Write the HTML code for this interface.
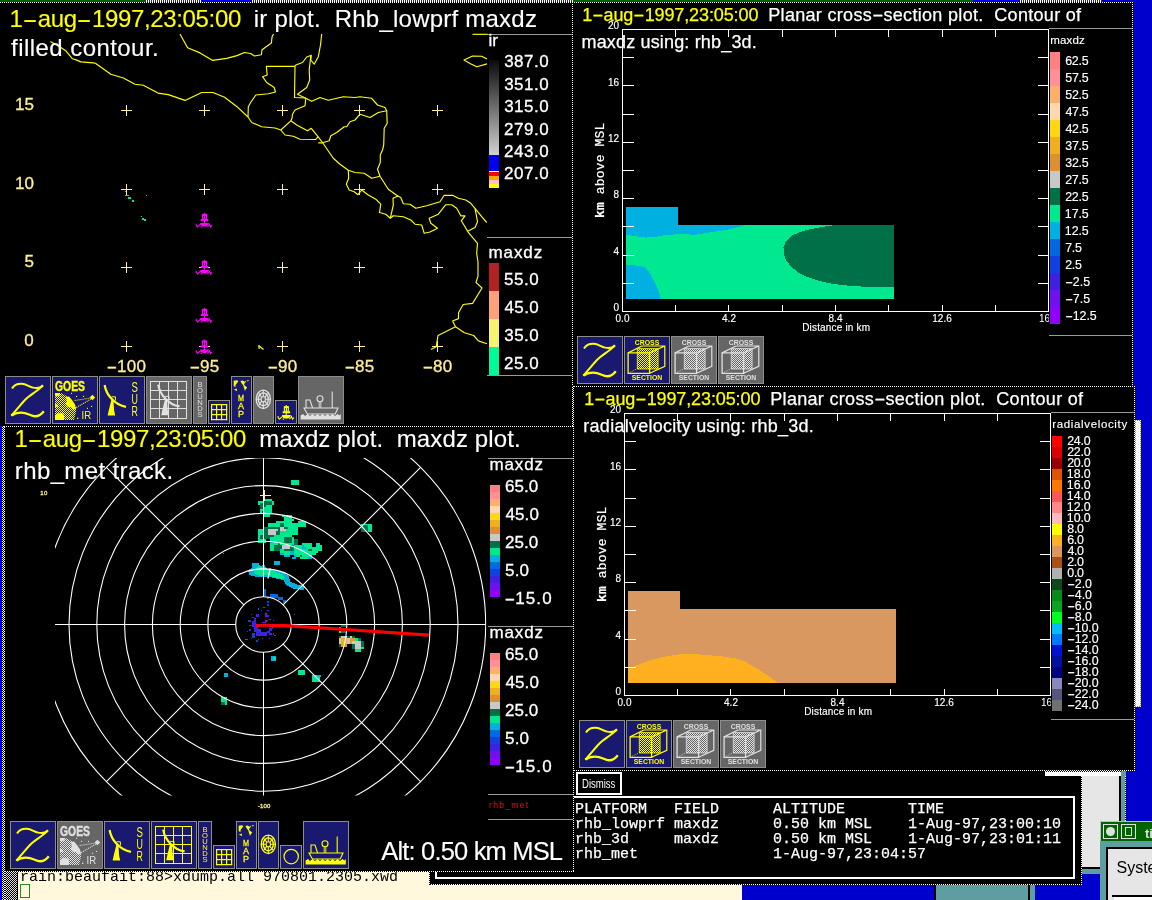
<!DOCTYPE html><html><head><meta charset="utf-8"><title>zebra display</title><style>
html,body{margin:0;padding:0;background:#000;overflow:hidden;}
#r{will-change:transform;position:relative;width:1152px;height:900px;overflow:hidden;background:#000;font-family:"Liberation Sans",sans-serif;}
.b{position:absolute;}
.t{position:absolute;white-space:pre;line-height:1;}
.hd{background-image:repeating-linear-gradient(90deg,#fff 0 1px,#000 1px 2px);}
.vd{background-image:repeating-linear-gradient(180deg,#fff 0 1px,#000 1px 2px);}
svg{position:absolute;overflow:hidden;}
.hy{display:inline-block;letter-spacing:0;}
.k{-webkit-text-stroke:0.25px currentColor;}
.k24{-webkit-text-stroke:0.12px currentColor;}
.k18{-webkit-text-stroke:0.25px currentColor;}
.k11{-webkit-text-stroke:0.15px currentColor;}
.k17{-webkit-text-stroke:0.3px currentColor;}
</style></head><body><div id="r">
<div class="b" style="left:1133px;top:0px;width:19px;height:387px;background:#0000cd;"></div>
<div class="b" style="left:1135px;top:386px;width:17px;height:436px;background:#0000cd;"></div>
<div class="b" style="left:1126px;top:771px;width:26px;height:52px;background:#0000cd;"></div>
<div class="b" style="left:0px;top:0px;width:1152px;height:2px;background:#9a9a9a;background-image:repeating-linear-gradient(90deg,#fff 0 1px,#333 1px 2px);"></div>
<div class="b" style="left:0px;top:0px;width:145px;height:2px;background:#006400;"></div>
<div class="b" style="left:201px;top:0px;width:51px;height:2px;background:#0000ee;"></div>
<div class="b" style="left:573px;top:0px;width:400px;height:2px;background:#006400;"></div>
<div class="b" style="left:973px;top:0px;width:47px;height:2px;background:#0000ee;"></div>
<div class="b" style="left:1102px;top:0px;width:50px;height:2px;background:#0000cd;"></div>
<div class="b" style="left:5px;top:871px;width:737px;height:29px;background:#fff8dc;"></div>
<div class="b" style="left:5px;top:871px;width:12px;height:29px;background:#888;background-image:repeating-conic-gradient(#000 0 25%,#ddd 0 50%);background-size:2px 2px;"></div>
<div class="b" style="left:17px;top:871px;width:1px;height:29px;background:#000;"></div>
<span class="t term" style="left:20.00px;top:869.50px;font-size:15px;color:#000;font-family:'Liberation Mono',monospace;">rain:beaufait:88&gt;xdump.all 970801.2305.xwd</span>
<div class="b" style="left:20px;top:884px;width:10px;height:14px;background:#fff8dc;box-sizing:border-box;border:1px solid #228b22;"></div>
<div class="b" style="left:742px;top:885px;width:192px;height:15px;background:#0000cd;"></div>
<div class="b" style="left:934px;top:885px;width:2px;height:15px;background:#000;"></div>
<div class="b" style="left:936px;top:885px;width:92px;height:15px;background:#5f9ea0;"></div>
<div class="b" style="left:1028px;top:885px;width:2px;height:15px;background:#000;"></div>
<div class="b" style="left:1030px;top:885px;width:5px;height:15px;background:#5f9ea0;"></div>
<div class="b" style="left:1035px;top:874px;width:66px;height:26px;background:#0000cd;"></div>
<div class="b" style="left:0px;top:426px;width:2px;height:474px;background:#0000ee;"></div>
<div class="b" style="left:2px;top:426px;width:3px;height:474px;background:#999;background-image:repeating-conic-gradient(#fff 0 25%,#000 0 50%);background-size:2px 2px;"></div>
<div class="b" style="left:429px;top:771px;width:653px;height:114px;background:#000;"></div>
<div class="b hd" style="left:429px;top:884px;width:653px;height:1px;background-position:0px 0"></div>
<div class="b vd" style="left:429px;top:871px;width:1px;height:14px;background-position:0 0px"></div>
<div class="b vd" style="left:1081px;top:776px;width:1px;height:109px;background-position:0 0px"></div>
<div class="b" style="left:1045px;top:771px;width:77px;height:5px;background:#fff;background-image:repeating-linear-gradient(90deg,#fff 0 1px,#000 1px 2px);background-size:2px 1px;background-repeat:repeat-x;"></div>
<div class="b" style="left:1082px;top:776px;width:37px;height:92px;background:#e6e6e6;"></div>
<div class="b" style="left:1119px;top:776px;width:2px;height:46px;background:#000;"></div>
<div class="b" style="left:1121px;top:771px;width:5px;height:51px;background:#5f9ea0;"></div>
<div class="b vd" style="left:1125px;top:776px;width:1px;height:46px;background-position:0 0px"></div>
<div class="b" style="left:1082px;top:867px;width:19px;height:2px;background:#000;"></div>
<div class="b" style="left:1082px;top:869px;width:19px;height:5px;background:#5f9ea0;"></div>
<div class="b" style="left:435px;top:796px;width:640px;height:83px;background:transparent;box-sizing:border-box;border:2px solid #fff;"></div>
<div class="b" style="left:576px;top:772px;width:46px;height:23px;background:#000;box-sizing:border-box;border:2px solid #fff;"></div>
<span class="t" style="left:581.70px;top:778.34px;font-size:12px;color:#fff;transform-origin:0 0;transform:scaleX(0.795);">Dismiss</span>
<span class="t k" style="left:575.00px;top:801.90px;font-size:15px;color:#fff;font-family:'Liberation Mono',monospace;">PLATFORM   FIELD      ALTITUDE       TIME</span>
<span class="t k" style="left:575.00px;top:816.80px;font-size:15px;color:#fff;font-family:'Liberation Mono',monospace;">rhb_lowprf maxdz      0.50 km MSL    1-Aug-97,23:00:10</span>
<span class="t k" style="left:575.00px;top:831.70px;font-size:15px;color:#fff;font-family:'Liberation Mono',monospace;">rhb_3d     maxdz      0.50 km MSL    1-Aug-97,23:01:11</span>
<span class="t k" style="left:575.00px;top:846.60px;font-size:15px;color:#fff;font-family:'Liberation Mono',monospace;">rhb_met               1-Aug-97,23:04:57</span>
<div class="b" style="left:1100px;top:821px;width:52px;height:79px;background:#5f9ea0;"></div>
<div class="b" style="left:1100px;top:821px;width:52px;height:20px;background:#006400;box-sizing:border-box;border-top:1px solid #b0c4c4;border-left:1px solid #b0c4c4;"></div>
<div class="b" style="left:1103px;top:824px;width:15px;height:15px;background:#006400;box-sizing:border-box;border:1px solid #e0e0e0;"></div>
<div class="b" style="left:1106px;top:827px;width:9px;height:9px;background:#e0e0e0;border-radius:50%;"></div>
<div class="b" style="left:1121px;top:824px;width:15px;height:15px;background:#006400;box-sizing:border-box;border:1px solid #e0e0e0;"></div>
<div class="b" style="left:1125px;top:827px;width:7px;height:9px;background:#006400;box-sizing:border-box;border:1px solid #e0e0e0;"></div>
<span class="t" style="left:1145.00px;top:826.50px;font-size:13px;color:#e0e0e0;font-weight:bold;">ti</span>
<div class="b" style="left:1106px;top:847px;width:46px;height:53px;background:#000;"></div>
<div class="b" style="left:1108px;top:849px;width:44px;height:51px;background:#e6e6e6;"></div>
<span class="t" style="left:1116.50px;top:859.96px;font-size:16px;color:#000;">Syste</span>
<div class="b" style="left:1112px;top:895px;width:40px;height:2px;background:#000;"></div>
<div class="b" style="left:1114px;top:897px;width:38px;height:3px;background:#fff;"></div>
<div class="b" style="left:0px;top:3px;width:573px;height:423px;background:#000;"></div>
<div class="b" style="left:5px;top:427px;width:569px;height:444px;background:#000;"></div>
<div class="b" style="left:574px;top:3px;width:559px;height:383px;background:#000;"></div>
<div class="b" style="left:575px;top:387px;width:560px;height:384px;background:#000;"></div>
<div class="b" style="left:487px;top:34px;width:85px;height:1px;background:#9a9a9a;"></div>
<div class="b" style="left:487px;top:237px;width:85px;height:1px;background:#9a9a9a;"></div>
<div class="b" style="left:487px;top:375px;width:85px;height:1px;background:#9a9a9a;"></div>
<svg style="left:0;top:3px" width="573" height="423" viewBox="0 3 573 423" shape-rendering="crispEdges"><defs><pattern id="sty" width="2" height="2" patternUnits="userSpaceOnUse"><rect width="1" height="1" fill="#ffff00"/><rect x="1" y="1" width="1" height="1" fill="#ffff00"/></pattern><pattern id="stw" width="2" height="2" patternUnits="userSpaceOnUse"><rect width="1" height="1" fill="#e0e0e0"/><rect x="1" y="1" width="1" height="1" fill="#e0e0e0"/></pattern></defs><defs><linearGradient id="irg" x1="0" y1="0" x2="0" y2="1"><stop offset="0" stop-color="#0a0a0a"/><stop offset="1" stop-color="#d2d2d2"/></linearGradient></defs><rect x="489" y="60" width="10" height="95" fill="url(#irg)"/><rect x="489" y="155" width="10" height="16" fill="#0000ee"/><rect x="489" y="171" width="10" height="1" fill="#ffffff"/><rect x="489" y="172" width="10" height="4" fill="#ff0000"/><rect x="489" y="176" width="10" height="4" fill="#ffa500"/><rect x="489" y="180" width="10" height="4" fill="#ffc0cb"/><rect x="489" y="184" width="10" height="4" fill="#ffff00"/><rect x="489" y="263" width="10" height="28" fill="#b22222"/><rect x="489" y="291" width="10" height="28" fill="#ffa07a"/><rect x="489" y="319" width="10" height="28" fill="#f8f272"/><rect x="489" y="347" width="10" height="28" fill="#00fa9a"/><path d="M121.0 110.5 H132.0 M126.5 105.0 V116.0" stroke="#ffee94" stroke-width="1" fill="none"/><path d="M121.0 189.5 H132.0 M126.5 184.0 V195.0" stroke="#ffee94" stroke-width="1" fill="none"/><path d="M121.0 267.5 H132.0 M126.5 262.0 V273.0" stroke="#ffee94" stroke-width="1" fill="none"/><path d="M121.0 346.5 H132.0 M126.5 341.0 V352.0" stroke="#ffee94" stroke-width="1" fill="none"/><path d="M199.0 110.5 H210.0 M204.5 105.0 V116.0" stroke="#ffee94" stroke-width="1" fill="none"/><path d="M199.0 189.5 H210.0 M204.5 184.0 V195.0" stroke="#ffee94" stroke-width="1" fill="none"/><path d="M199.0 267.5 H210.0 M204.5 262.0 V273.0" stroke="#ffee94" stroke-width="1" fill="none"/><path d="M199.0 346.5 H210.0 M204.5 341.0 V352.0" stroke="#ffee94" stroke-width="1" fill="none"/><path d="M277.0 110.5 H288.0 M282.5 105.0 V116.0" stroke="#ffee94" stroke-width="1" fill="none"/><path d="M277.0 189.5 H288.0 M282.5 184.0 V195.0" stroke="#ffee94" stroke-width="1" fill="none"/><path d="M277.0 267.5 H288.0 M282.5 262.0 V273.0" stroke="#ffee94" stroke-width="1" fill="none"/><path d="M277.0 346.5 H288.0 M282.5 341.0 V352.0" stroke="#ffee94" stroke-width="1" fill="none"/><path d="M354.0 110.5 H365.0 M359.5 105.0 V116.0" stroke="#ffee94" stroke-width="1" fill="none"/><path d="M354.0 189.5 H365.0 M359.5 184.0 V195.0" stroke="#ffee94" stroke-width="1" fill="none"/><path d="M354.0 267.5 H365.0 M359.5 262.0 V273.0" stroke="#ffee94" stroke-width="1" fill="none"/><path d="M354.0 346.5 H365.0 M359.5 341.0 V352.0" stroke="#ffee94" stroke-width="1" fill="none"/><path d="M432.0 110.5 H443.0 M437.5 105.0 V116.0" stroke="#ffee94" stroke-width="1" fill="none"/><path d="M432.0 189.5 H443.0 M437.5 184.0 V195.0" stroke="#ffee94" stroke-width="1" fill="none"/><path d="M432.0 267.5 H443.0 M437.5 262.0 V273.0" stroke="#ffee94" stroke-width="1" fill="none"/><path d="M432.0 346.5 H443.0 M437.5 341.0 V352.0" stroke="#ffee94" stroke-width="1" fill="none"/><g fill="none" stroke="#ffff00" stroke-width="1.15" stroke-linejoin="round" shape-rendering="auto"><path d="M50.4 41.5 L60.0 46.9 L65.5 50.4 L72.5 58.8 L75.5 59.6 L80.8 61.9 L93.2 62.9 L95.4 63.3 L110.8 74.3 L123.4 78.0 L135.0 84.2 L143.3 85.2 L158.0 93.1 L168.3 94.6 L185.0 100.4 L201.7 92.5 L213.0 92.5 L224.6 97.3 L237.0 106.7 L248.0 117.0 L251.7 122.5 L261.7 126.7 L275.0 128.0 L280.8 130.0 L285.0 135.0 L293.3 136.2 L300.0 139.2 L315.8 139.5 L318.0 136.7 L322.5 142.5 L333.3 158.3 L340.0 164.2 L348.3 170.3"/><path d="M180.0 34.0 L187.6 47.8 L200.0 52.9 L212.7 60.4 L226.6 58.4 L237.0 55.6 L244.4 52.5 L250.6 53.5 L254.5 56.0 L261.4 54.7 L262.0 49.8 L271.4 43.0 L272.0 37.0 L273.5 34.0"/><path d="M321.7 34.0 L320.5 45.0 L318.3 56.7 L314.2 64.2 L310.8 60.0 L311.3 55.3 L306.7 57.0 L302.5 62.5 L295.8 65.0 L295.0 66.3"/><path d="M310.8 56.0 L309.2 70.0 L309.7 80.0 L306.7 87.5 L297.5 94.2 L305.8 98.3"/><path d="M295.0 66.3 L266.3 66.3 L267.2 75.0 L262.5 76.7 L266.7 82.5 L274.2 87.5 L275.5 92.0 L268.3 93.8 L255.8 95.0 L250.6 102.5 L248.3 106.7 L248.0 117.0"/><path d="M295.0 66.3 L294.5 97.5 L305.8 98.0"/><path d="M305.8 98.3 L305.0 105.8 L295.0 110.0 L292.5 114.2 L292.0 118.3 L290.8 120.8 L280.8 130.0"/><path d="M290.8 120.8 L296.7 125.0 L307.5 130.8 L311.3 128.3 L318.0 136.7"/><path d="M305.8 98.3 L311.7 101.3 L320.0 97.5 L328.3 100.3 L343.3 96.7 L355.0 97.5 L360.0 96.7 L371.7 98.3 L377.5 105.0 L385.0 107.5 L386.7 110.8 L387.2 123.3 L384.2 128.3 L383.7 145.0 L382.5 150.0 L380.3 155.0 L380.3 162.5 L377.5 169.2 L380.0 176.3 L388.3 189.2 L396.7 195.3 L400.8 197.5 L403.3 203.7 L410.0 204.2 L415.8 208.3 L426.7 205.8 L440.0 201.7 L444.2 195.3 L452.5 195.3 L458.3 198.3 L465.8 200.0 L470.8 203.3 L475.0 208.3 L481.7 216.7 L486.7 222.5"/><path d="M386.7 110.8 L378.3 112.5 L370.0 117.5 L360.0 114.2 L355.0 120.0 L350.0 121.7 L346.7 126.7 L344.2 126.7 L336.7 132.5 L330.8 135.8 L329.2 140.8 L322.5 142.8 L318.3 142.8"/><path d="M348.3 170.3 L355.0 172.5 L364.2 173.3 L371.7 178.3 L380.0 176.3"/><path d="M348.3 170.3 L348.7 178.3 L346.3 184.2 L349.2 190.0 L354.2 191.7 L358.0 194.7 L361.7 190.0 L368.3 195.0 L375.8 199.2 L380.8 204.2 L379.5 212.5 L385.8 214.2 L390.3 218.3"/><path d="M398.0 196.0 L393.0 198.3 L393.3 205.0 L390.3 218.3"/><path d="M390.3 218.3 L393.3 215.8 L403.3 216.7 L410.8 220.0 L415.0 224.2 L421.7 225.0 L424.2 233.3 L430.0 232.0 L437.5 228.3 L430.8 223.3 L429.2 218.3 L438.3 214.2 L445.8 204.7 L451.7 204.7 L456.7 208.3 L460.8 215.8 L465.0 215.8 L461.3 220.8 L465.0 226.7 L467.5 231.3 L475.0 227.5 L477.5 221.7 L475.0 208.3"/><path d="M467.5 231.3 L477.5 243.3 L476.7 253.3 L478.0 262.0 L478.0 276.4 L476.0 282.3 L482.0 288.0 L472.6 303.4 L463.2 304.5 L458.5 312.7 L458.5 318.6 L452.6 321.0 L455.5 326.8 L438.0 335.5 L436.2 346.7 L431.0 349.5"/><path d="M455.5 326.8 L464.4 332.7 L473.7 335.5 L478.4 340.9 L487.0 343.7"/><path d="M487.0 59.0 L481.7 56.2 L472.5 56.0 L464.0 60.0 L470.0 63.4 L476.8 66.8 L487.0 63.9"/><path d="M472.5 34.3 L487.5 34.3"/><path d="M258.6 345.5 L259.3 349.0"/><path d="M258.6 345.5 L263.5 349.5"/></g><g transform="translate(204.4,220)" shape-rendering="auto"><rect x="-0.6" y="-7.1" width="1.2" height="1.2" fill="#ff00ff"/><rect x="-2.5" y="-6.1" width="5.1" height="5.2" fill="#ff00ff"/><rect x="-1.4" y="-4.1" width="0.8" height="2.6" fill="#000"/><rect x="0.6" y="-4.1" width="0.8" height="2.6" fill="#000"/><rect x="-3.6" y="-1" width="7.4" height="2.1" fill="#ff00ff"/><rect x="-0.6" y="1" width="1.2" height="2.1" fill="#ff00ff"/><path d="M-4.5 2.9 H4.8 L3.2 5.6 L1.4 6.4 H-1.6 L-3.2 5.6 Z" fill="#ff00ff"/><path d="M-8.2 3.8 V5.4 L-6.8 6.9 L-5 5.2 L-3.6 4.2 M-3.6 6.9 H-2.2 M0 6.9 L0.2 6.9 M3 6.9 L4.4 5.4 L5.2 4.2 L6.2 6.9 L7.4 5.6 L7.6 5.6" fill="none" stroke="#ff00ff" stroke-width="1.1"/></g><g transform="translate(204.4,267)" shape-rendering="auto"><rect x="-0.6" y="-7.1" width="1.2" height="1.2" fill="#ff00ff"/><rect x="-2.5" y="-6.1" width="5.1" height="5.2" fill="#ff00ff"/><rect x="-1.4" y="-4.1" width="0.8" height="2.6" fill="#000"/><rect x="0.6" y="-4.1" width="0.8" height="2.6" fill="#000"/><rect x="-3.6" y="-1" width="7.4" height="2.1" fill="#ff00ff"/><rect x="-0.6" y="1" width="1.2" height="2.1" fill="#ff00ff"/><path d="M-4.5 2.9 H4.8 L3.2 5.6 L1.4 6.4 H-1.6 L-3.2 5.6 Z" fill="#ff00ff"/><path d="M-8.2 3.8 V5.4 L-6.8 6.9 L-5 5.2 L-3.6 4.2 M-3.6 6.9 H-2.2 M0 6.9 L0.2 6.9 M3 6.9 L4.4 5.4 L5.2 4.2 L6.2 6.9 L7.4 5.6 L7.6 5.6" fill="none" stroke="#ff00ff" stroke-width="1.1"/></g><g transform="translate(204.4,315)" shape-rendering="auto"><rect x="-0.6" y="-7.1" width="1.2" height="1.2" fill="#ff00ff"/><rect x="-2.5" y="-6.1" width="5.1" height="5.2" fill="#ff00ff"/><rect x="-1.4" y="-4.1" width="0.8" height="2.6" fill="#000"/><rect x="0.6" y="-4.1" width="0.8" height="2.6" fill="#000"/><rect x="-3.6" y="-1" width="7.4" height="2.1" fill="#ff00ff"/><rect x="-0.6" y="1" width="1.2" height="2.1" fill="#ff00ff"/><path d="M-4.5 2.9 H4.8 L3.2 5.6 L1.4 6.4 H-1.6 L-3.2 5.6 Z" fill="#ff00ff"/><path d="M-8.2 3.8 V5.4 L-6.8 6.9 L-5 5.2 L-3.6 4.2 M-3.6 6.9 H-2.2 M0 6.9 L0.2 6.9 M3 6.9 L4.4 5.4 L5.2 4.2 L6.2 6.9 L7.4 5.6 L7.6 5.6" fill="none" stroke="#ff00ff" stroke-width="1.1"/></g><g transform="translate(204.4,346.5)" shape-rendering="auto"><rect x="-0.6" y="-7.1" width="1.2" height="1.2" fill="#ff00ff"/><rect x="-2.5" y="-6.1" width="5.1" height="5.2" fill="#ff00ff"/><rect x="-1.4" y="-4.1" width="0.8" height="2.6" fill="#000"/><rect x="0.6" y="-4.1" width="0.8" height="2.6" fill="#000"/><rect x="-3.6" y="-1" width="7.4" height="2.1" fill="#ff00ff"/><rect x="-0.6" y="1" width="1.2" height="2.1" fill="#ff00ff"/><path d="M-4.5 2.9 H4.8 L3.2 5.6 L1.4 6.4 H-1.6 L-3.2 5.6 Z" fill="#ff00ff"/><path d="M-8.2 3.8 V5.4 L-6.8 6.9 L-5 5.2 L-3.6 4.2 M-3.6 6.9 H-2.2 M0 6.9 L0.2 6.9 M3 6.9 L4.4 5.4 L5.2 4.2 L6.2 6.9 L7.4 5.6 L7.6 5.6" fill="none" stroke="#ff00ff" stroke-width="1.1"/></g><rect x="124.5" y="191" width="1" height="1" fill="#00e890"/><rect x="125" y="195" width="4" height="1.4" fill="#00e890"/><rect x="128" y="197" width="3" height="2" fill="#00e890"/><rect x="132" y="200" width="1.6" height="1.6" fill="#00e890"/><rect x="146" y="194.6" width="1.4" height="1.4" fill="#00e890"/><rect x="141" y="216" width="1.4" height="1.4" fill="#00e890"/><rect x="142" y="218" width="2" height="1.6" fill="#00e890"/><rect x="144" y="219.4" width="2" height="1.6" fill="#00e890"/><g shape-rendering="auto"><rect x="5" y="376" width="46" height="48" fill="#8c8c8c"/><rect x="6" y="377" width="44" height="46" fill="#191970"/><g transform="translate(5,376)"><path d="M7 12.6 C9 9 13 7.5 16.8 7.7 C21 7.9 24 10.6 28 11.6 C32 12.6 35.5 11.8 38 9.2" fill="none" stroke="#ffff00" stroke-width="2"/><path d="M37.8 9.6 C32 15.5 25 19 21 23 C16 28 12 33.5 6.3 39.6" fill="none" stroke="#ffff00" stroke-width="2"/><path d="M6.4 39.6 C9 37.6 12 36.7 16 36.7 C21 36.7 24 38.6 27 39.6 C31 41 35.5 39.6 38.8 35.2" fill="none" stroke="#ffff00" stroke-width="2.3"/></g><rect x="52" y="376" width="46" height="48" fill="#8c8c8c"/><rect x="53" y="377" width="44" height="46" fill="#191970"/><g transform="translate(52,376)"><text x="3" y="15.1" font-family="Liberation Sans,sans-serif" font-weight="bold" font-size="15.4" fill="#ffff00" stroke="#ffff00" stroke-width="0.4" textLength="30" lengthAdjust="spacingAndGlyphs">GOES</text><path d="M3 17 L9 17 C15 19.6 20 24 22.5 28 C24 31 24.4 34 24 36 L22 44 L3 44 Z" fill="url(#sty)"/><path d="M3 17 L8 17 L7.4 19.4 L4.6 20.6 L3 20.2 Z M14 21 L17 20.5 L20 24 L23 28.5 L24 33 L21 33.5 L18.5 31 L16 31 L13.5 28 L15 25 Z M3 39 L6 37.3 L10.5 37.3 L12 39 L12 44 L3 44 Z M3 28 L5.4 28.4 L6.2 30.4 L4 31.2 L3 30.8 Z" fill="#ffff00"/><path d="M22.6 24.5 L38 22.2" stroke="#ffff00" stroke-width="1.1" stroke-dasharray="1 1" fill="none"/><path d="M24.3 31.5 L39 22.9" stroke="#ffff00" stroke-width="1.1" stroke-dasharray="1 1" fill="none"/><path d="M40.4 18.7 L43.2 21.5 L40.4 24.3 L37.6 21.5 Z" fill="#ffff00"/><rect x="19" y="16.8" width="1.1" height="1.1" fill="#ffff00"/><rect x="24" y="19.9" width="1.1" height="1.1" fill="#ffff00"/><rect x="31" y="19.9" width="1.1" height="1.1" fill="#ffff00"/><rect x="39" y="29.9" width="1.1" height="1.1" fill="#ffff00"/><rect x="34.9" y="31.8" width="1.1" height="1.1" fill="#ffff00"/><rect x="25" y="41.7" width="1.3" height="1.3" fill="#ffff00"/><text x="29.6" y="42.9" font-family="Liberation Sans,sans-serif" font-size="10.5" fill="#ffff00" textLength="9.6" lengthAdjust="spacingAndGlyphs">IR</text></g><rect x="99" y="376" width="46" height="48" fill="#8c8c8c"/><rect x="100" y="377" width="44" height="46" fill="#191970"/><g transform="translate(99,376)"><g transform="translate(0,0)"><path d="M5.6 9 C7 18 15 29 27 30.8" fill="none" stroke="#ffff00" stroke-width="2.2"/><path d="M12.6 20.8 H16.4 V24.6" fill="none" stroke="#ffff00" stroke-width="1"/><path d="M12.8 22 L14.4 24 L15.2 35 L16.2 39.6 L8.6 39.6 L9.6 35 Z" fill="#ffff00"/></g><text x="32.6" y="16.4" font-family="Liberation Sans,sans-serif" font-size="14" fill="#ffff00" textLength="6.4" lengthAdjust="spacingAndGlyphs">S</text><text x="32.6" y="27.8" font-family="Liberation Sans,sans-serif" font-size="14" fill="#ffff00" textLength="6.4" lengthAdjust="spacingAndGlyphs">U</text><text x="32.6" y="40" font-family="Liberation Sans,sans-serif" font-size="14" fill="#ffff00" textLength="6.4" lengthAdjust="spacingAndGlyphs">R</text></g><rect x="146" y="376" width="46" height="48" fill="#8c8c8c"/><rect x="147" y="377" width="44" height="46" fill="#666666"/><g transform="translate(146,376)"><rect x="4.0" y="5.0" width="1" height="38.0" fill="#e0e0e0"/><rect x="13.0" y="5.0" width="1" height="38.0" fill="#e0e0e0"/><rect x="22.0" y="5.0" width="1" height="38.0" fill="#e0e0e0"/><rect x="31.0" y="5.0" width="1" height="38.0" fill="#e0e0e0"/><rect x="40.0" y="5.0" width="1" height="38.0" fill="#e0e0e0"/><rect x="4.0" y="5.0" width="37.0" height="1" fill="#e0e0e0"/><rect x="4.0" y="14.0" width="37.0" height="1" fill="#e0e0e0"/><rect x="4.0" y="23.0" width="37.0" height="1" fill="#e0e0e0"/><rect x="4.0" y="32.0" width="37.0" height="1" fill="#e0e0e0"/><rect x="4.0" y="42.0" width="37.0" height="1" fill="#e0e0e0"/><g transform="translate(6.6,-0.4)"><path d="M5.6 9 C7 18 15 29 27 30.8" fill="none" stroke="#e0e0e0" stroke-width="2.2"/><path d="M12.6 20.8 H16.4 V24.6" fill="none" stroke="#e0e0e0" stroke-width="1"/><path d="M12.8 22 L14.4 24 L15.2 35 L16.2 39.6 L8.6 39.6 L9.6 35 Z" fill="#e0e0e0"/></g></g><rect x="193" y="376" width="14" height="48" fill="#8c8c8c"/><rect x="194" y="377" width="12" height="46" fill="#666666"/><g transform="translate(193,376)"><text x="7" y="11.4" text-anchor="middle" font-family="Liberation Sans,sans-serif" font-size="7.6" fill="#e0e0e0">B</text><text x="7" y="17.4" text-anchor="middle" font-family="Liberation Sans,sans-serif" font-size="7.6" fill="#e0e0e0">O</text><text x="7" y="23.4" text-anchor="middle" font-family="Liberation Sans,sans-serif" font-size="7.6" fill="#e0e0e0">U</text><text x="7" y="29.4" text-anchor="middle" font-family="Liberation Sans,sans-serif" font-size="7.6" fill="#e0e0e0">N</text><text x="7" y="35.4" text-anchor="middle" font-family="Liberation Sans,sans-serif" font-size="7.6" fill="#e0e0e0">D</text><text x="7" y="41.4" text-anchor="middle" font-family="Liberation Sans,sans-serif" font-size="7.6" fill="#e0e0e0">S</text></g><rect x="208" y="400" width="22" height="24" fill="#8c8c8c"/><rect x="209" y="401" width="20" height="22" fill="#191970"/><g transform="translate(208,400)"><rect x="3.0" y="4.0" width="1.2" height="16.2" fill="#ffff00"/><rect x="8.0" y="4.0" width="1.2" height="16.2" fill="#ffff00"/><rect x="13.0" y="4.0" width="1.2" height="16.2" fill="#ffff00"/><rect x="18.0" y="4.0" width="1.2" height="16.2" fill="#ffff00"/><rect x="3.0" y="4.0" width="16.2" height="1.2" fill="#ffff00"/><rect x="3.0" y="9.0" width="16.2" height="1.2" fill="#ffff00"/><rect x="3.0" y="14.0" width="16.2" height="1.2" fill="#ffff00"/><rect x="3.0" y="19.0" width="16.2" height="1.2" fill="#ffff00"/></g><rect x="231" y="376" width="21" height="48" fill="#8c8c8c"/><rect x="232" y="377" width="19" height="46" fill="#191970"/><g transform="translate(231,376)"><path d="M2.7 4.8 L5.8 4.2 L7.4 5 L6.1 6.9 L4.6 8.7 L4.4 11.2 L2.7 9.9 Z M2.7 13.8 L5.8 12.4 L6 15.2 L4.4 14.2 Z" fill="#ffff00"/><path d="M9.4 5.1 L11.6 4.6 L13.7 5.7 L15.4 4.2 L14.4 6.6 L13 8 L13.6 9.6 L16.2 11.6 L14.6 13.4 L14 15 L13 12 L12.4 9.6 L10.8 7.4 Z M16 4.2 L18 4 L16.8 5.8 Z" fill="#ffff00"/><text x="6.9" y="24.8" font-family="Liberation Sans,sans-serif" font-size="9.4" fill="#ffff00" stroke="#ffff00" stroke-width="0.3" textLength="6" lengthAdjust="spacingAndGlyphs">M</text><text x="6.9" y="32.9" font-family="Liberation Sans,sans-serif" font-size="9.4" fill="#ffff00" stroke="#ffff00" stroke-width="0.3" textLength="6" lengthAdjust="spacingAndGlyphs">A</text><text x="6.9" y="40.9" font-family="Liberation Sans,sans-serif" font-size="9.4" fill="#ffff00" stroke="#ffff00" stroke-width="0.3" textLength="6" lengthAdjust="spacingAndGlyphs">P</text></g><rect x="253" y="376" width="21" height="48" fill="#8c8c8c"/><rect x="254" y="377" width="19" height="46" fill="#666666"/><g transform="translate(253,376)"><ellipse cx="10.3" cy="23.3" rx="7.1" ry="9.2" fill="none" stroke="#e0e0e0" stroke-width="1.4"/><ellipse cx="10.3" cy="23.3" rx="5" ry="6.4" fill="none" stroke="#e0e0e0" stroke-width="1.4"/><ellipse cx="10.3" cy="23.3" rx="2.2" ry="2.6" fill="none" stroke="#e0e0e0" stroke-width="1.1"/><path d="M10.3 14.100000000000001 V20.7 M10.3 25.900000000000002 V32.5 M3.200000000000001 23.3 H8.100000000000001 M12.5 23.3 H17.4 M5.9 17.5 L8.8 21.400000000000002 M14.700000000000001 17.5 L11.8 21.400000000000002 M5.9 29.1 L8.8 25.2 M14.700000000000001 29.1 L11.8 25.2" stroke="#e0e0e0" stroke-width="1.1" fill="none"/></g><rect x="275" y="400" width="22" height="24" fill="#8c8c8c"/><rect x="276" y="401" width="20" height="22" fill="#191970"/><g transform="translate(275,400)"><g transform="translate(11.3,12.2)"><rect x="-0.6" y="-7.1" width="1.2" height="1.2" fill="#ffff00"/><rect x="-2.5" y="-6.1" width="5.1" height="5.2" fill="#ffff00"/><rect x="-1.4" y="-4.1" width="0.8" height="2.6" fill="#191970"/><rect x="0.6" y="-4.1" width="0.8" height="2.6" fill="#191970"/><rect x="-3.6" y="-1" width="7.4" height="2.1" fill="#ffff00"/><rect x="-0.6" y="1" width="1.2" height="2.1" fill="#ffff00"/><path d="M-4.5 2.9 H4.8 L3.2 5.6 L1.4 6.4 H-1.6 L-3.2 5.6 Z" fill="#ffff00"/><path d="M-8.2 3.8 V5.4 L-6.8 6.9 L-5 5.2 L-3.6 4.2 M-3.6 6.9 H-2.2 M0 6.9 L0.2 6.9 M3 6.9 L4.4 5.4 L5.2 4.2 L6.2 6.9 L7.4 5.6 L7.6 5.6" fill="none" stroke="#ffff00" stroke-width="1.1"/></g></g><rect x="298" y="376" width="46" height="48" fill="#8c8c8c"/><rect x="299" y="377" width="44" height="46" fill="#666666"/><g transform="translate(298,376)"><path d="M6 32 H40 L37.2 38 H9.4 Z" fill="none" stroke="#e0e0e0" stroke-width="1.1"/><path d="M8 32 V24 H12 L14.6 32" fill="none" stroke="#e0e0e0" stroke-width="1.1"/><circle cx="22" cy="22.8" r="3" fill="none" stroke="#e0e0e0" stroke-width="1.1"/><path d="M21.2 26 V32 M22.8 26 V32" stroke="#e0e0e0" stroke-width="0.9"/><path d="M34.2 15.4 V32" stroke="#e0e0e0" stroke-width="1.1"/><path d="M2.6 43.4 V39.4 L5 38 L7 40 L9.6 38 L12 40 L14.6 38 L17 40 L19.6 38 L22 40 L24.6 38 L27 40 L29.6 38 L32 40 L34.6 38 L37 40 L39.6 38 L41.4 39.6 L42.8 38 V43.4 Z" fill="#e0e0e0"/></g></g></svg>
<span class="t k24" style="left:9.50px;top:6.58px;font-size:24px;color:#ffff00;letter-spacing:-0.343px;">1<span class="hy" style="transform:scaleX(1.9);margin:0 3.60px">-</span>aug<span class="hy" style="transform:scaleX(1.9);margin:0 3.60px">-</span>1997,23:05:00</span>
<span class="t k24" style="left:253.74px;top:6.58px;font-size:24px;color:#fff;letter-spacing:0.228px;">ir plot.  Rhb_lowprf maxdz</span>
<span class="t k24" style="left:11.06px;top:36.08px;font-size:24px;color:#fff;letter-spacing:0.444px;">filled contour.</span>
<span class="t k17" style="left:488.50px;top:32.31px;font-size:17px;color:#fff;">ir</span>
<span class="t k17" style="left:504.20px;top:53.41px;font-size:17px;color:#fff;letter-spacing:0.472px;">387.0</span>
<span class="t k17" style="left:504.20px;top:75.81px;font-size:17px;color:#fff;letter-spacing:0.472px;">351.0</span>
<span class="t k17" style="left:504.20px;top:98.21px;font-size:17px;color:#fff;letter-spacing:0.472px;">315.0</span>
<span class="t k17" style="left:503.95px;top:120.61px;font-size:17px;color:#fff;letter-spacing:0.536px;">279.0</span>
<span class="t k17" style="left:503.95px;top:143.01px;font-size:17px;color:#fff;letter-spacing:0.536px;">243.0</span>
<span class="t k17" style="left:503.95px;top:165.41px;font-size:17px;color:#fff;letter-spacing:0.536px;">207.0</span>
<span class="t k17" style="left:488.50px;top:243.51px;font-size:17px;color:#fff;letter-spacing:0.901px;">maxdz</span>
<span class="t k17" style="left:504.12px;top:270.61px;font-size:17px;color:#fff;letter-spacing:0.537px;">55.0</span>
<span class="t k17" style="left:504.46px;top:298.61px;font-size:17px;color:#fff;letter-spacing:0.423px;">45.0</span>
<span class="t k17" style="left:504.20px;top:326.61px;font-size:17px;color:#fff;letter-spacing:0.508px;">35.0</span>
<span class="t k17" style="left:503.95px;top:354.61px;font-size:17px;color:#fff;letter-spacing:0.593px;">25.0</span>
<span class="t k17" style="left:15.01px;top:95.81px;font-size:17px;color:#ffee94;">15</span>
<span class="t k17" style="left:14.93px;top:174.61px;font-size:17px;color:#ffee94;">10</span>
<span class="t k17" style="left:24.45px;top:252.91px;font-size:17px;color:#ffee94;">5</span>
<span class="t k17" style="left:24.36px;top:331.61px;font-size:17px;color:#ffee94;">0</span>
<span class="t k17" style="left:106.30px;top:358.31px;font-size:17px;color:#ffee94;letter-spacing:0.300px;"><span class="hy" style="transform:scaleX(1.9);margin:0 2.55px">-</span>100</span>
<span class="t k17" style="left:189.21px;top:358.31px;font-size:17px;color:#ffee94;letter-spacing:0.300px;"><span class="hy" style="transform:scaleX(1.9);margin:0 2.55px">-</span>95</span>
<span class="t k17" style="left:267.17px;top:358.31px;font-size:17px;color:#ffee94;letter-spacing:0.300px;"><span class="hy" style="transform:scaleX(1.9);margin:0 2.55px">-</span>90</span>
<span class="t k17" style="left:344.21px;top:358.31px;font-size:17px;color:#ffee94;letter-spacing:0.300px;"><span class="hy" style="transform:scaleX(1.9);margin:0 2.55px">-</span>85</span>
<span class="t k17" style="left:422.17px;top:358.31px;font-size:17px;color:#ffee94;letter-spacing:0.300px;"><span class="hy" style="transform:scaleX(1.9);margin:0 2.55px">-</span>80</span>
<div class="b" style="left:1049px;top:28px;width:84px;height:1px;background:#9a9a9a;"></div>
<div class="b" style="left:1049px;top:335px;width:84px;height:1px;background:#9a9a9a;"></div>
<svg style="left:574px;top:3px" width="559" height="383" viewBox="574 3 559 383" shape-rendering="crispEdges"><defs><pattern id="sty" width="2" height="2" patternUnits="userSpaceOnUse"><rect width="1" height="1" fill="#ffff00"/><rect x="1" y="1" width="1" height="1" fill="#ffff00"/></pattern><pattern id="stw" width="2" height="2" patternUnits="userSpaceOnUse"><rect width="1" height="1" fill="#e0e0e0"/><rect x="1" y="1" width="1" height="1" fill="#e0e0e0"/></pattern></defs><polygon points="626.0,207.0 678.0,207.0 678.0,225.0 893.5,225.0 893.5,299.0 626.0,299.0" fill="#00e890"/><polygon points="626.0,207.0 678.0,207.0 678.0,225.0 746.0,225.0 738.0,227.0 726.0,230.0 712.0,232.0 696.0,234.7 678.7,234.2 664.0,235.2 655.5,237.0 645.7,237.6 634.7,236.0 626.0,234.7" fill="#00b0e0"/><polygon points="626.0,264.5 640.8,266.0 645.0,267.6 648.0,270.0 651.0,275.0 655.5,283.6 659.0,292.0 660.8,299.0 626.0,299.0" fill="#00b0e0"/><polygon points="893.5,225.0 836.0,225.0 824.0,226.6 811.0,229.0 800.0,232.0 791.0,236.0 786.0,241.0 783.5,247.5 784.0,254.0 786.0,260.0 791.0,266.6 798.5,272.5 806.0,276.6 816.0,280.0 828.0,283.0 841.0,285.0 858.0,286.4 876.0,287.0 893.5,287.0" fill="#007048"/><path d="M622.5 29.5 H1048.5 V311.5 H622.5 Z" fill="none" stroke="#fff" stroke-width="1"/><path d="M622.5 283.5 h11 M1048.5 283.5 h-11 M622.5 255.5 h11 M1048.5 255.5 h-11 M622.5 226.5 h11 M1048.5 226.5 h-11 M622.5 198.5 h11 M1048.5 198.5 h-11 M622.5 170.5 h11 M1048.5 170.5 h-11 M622.5 142.5 h11 M1048.5 142.5 h-11 M622.5 114.5 h11 M1048.5 114.5 h-11 M622.5 85.5 h11 M1048.5 85.5 h-11 M622.5 57.5 h11 M1048.5 57.5 h-11 M675.5 29.5 v7 M675.5 311.5 v-7 M728.5 29.5 v7 M728.5 311.5 v-7 M782.5 29.5 v7 M782.5 311.5 v-7 M835.5 29.5 v7 M835.5 311.5 v-7 M888.5 29.5 v7 M888.5 311.5 v-7 M942.5 29.5 v7 M942.5 311.5 v-7 M995.5 29.5 v7 M995.5 311.5 v-7 " stroke="#fff" stroke-width="1" fill="none"/><rect x="1050" y="52" width="10" height="17" fill="#ff8080"/><rect x="1050" y="69" width="10" height="17" fill="#ff9098"/><rect x="1050" y="86" width="10" height="17" fill="#ffb068"/><rect x="1050" y="103" width="10" height="17" fill="#ffd8b0"/><rect x="1050" y="120" width="10" height="17" fill="#ffd810"/><rect x="1050" y="137" width="10" height="17" fill="#eeb020"/><rect x="1050" y="154" width="10" height="17" fill="#dd9030"/><rect x="1050" y="171" width="10" height="17" fill="#c8c8c8"/><rect x="1050" y="188" width="10" height="17" fill="#007048"/><rect x="1050" y="205" width="10" height="17" fill="#00e890"/><rect x="1050" y="222" width="10" height="17" fill="#00b0e0"/><rect x="1050" y="239" width="10" height="17" fill="#0068e0"/><rect x="1050" y="256" width="10" height="17" fill="#1040e0"/><rect x="1050" y="273" width="10" height="17" fill="#4020e0"/><rect x="1050" y="290" width="10" height="17" fill="#7010f0"/><rect x="1050" y="307" width="10" height="17" fill="#9000ff"/><g shape-rendering="auto"><rect x="577" y="336" width="46" height="48" fill="#8c8c8c"/><rect x="578" y="337" width="44" height="46" fill="#191970"/><g transform="translate(577,336)"><path d="M7 12.6 C9 9 13 7.5 16.8 7.7 C21 7.9 24 10.6 28 11.6 C32 12.6 35.5 11.8 38 9.2" fill="none" stroke="#ffff00" stroke-width="2"/><path d="M37.8 9.6 C32 15.5 25 19 21 23 C16 28 12 33.5 6.3 39.6" fill="none" stroke="#ffff00" stroke-width="2"/><path d="M6.4 39.6 C9 37.6 12 36.7 16 36.7 C21 36.7 24 38.6 27 39.6 C31 41 35.5 39.6 38.8 35.2" fill="none" stroke="#ffff00" stroke-width="2.3"/></g><rect x="624" y="336" width="46" height="48" fill="#8c8c8c"/><rect x="625" y="337" width="44" height="46" fill="#191970"/><g transform="translate(624,336)"><text x="23" y="8.8" text-anchor="middle" font-family="Liberation Sans,sans-serif" font-weight="bold" font-size="7.2" fill="#ffff00" textLength="24.5" lengthAdjust="spacingAndGlyphs">CROSS</text><path d="M17.8 10 H40.8 V30.4 L25.6 37.3 M40.8 10 L25.6 16.9 M17.8 10 L4.1 16.9" fill="none" stroke="#ffff00" stroke-width="1.2"/><path d="M4.1 37.3 L17.8 30.4" fill="none" stroke="#ffff00" stroke-width="1" stroke-dasharray="1 1.5"/><path d="M13.3 12.6 H34.1 V33 H13.3 Z" fill="url(#sty)" stroke="#ffff00" stroke-width="0.8"/><path d="M4.1 16.9 H25.6 V37.3 H4.1 Z" fill="none" stroke="#ffff00" stroke-width="1.3"/><text x="23" y="43.8" text-anchor="middle" font-family="Liberation Sans,sans-serif" font-weight="bold" font-size="7.2" fill="#ffff00" textLength="30.4" lengthAdjust="spacingAndGlyphs">SECTION</text></g><rect x="671" y="336" width="46" height="48" fill="#8c8c8c"/><rect x="672" y="337" width="44" height="46" fill="#666666"/><g transform="translate(671,336)"><text x="23" y="8.8" text-anchor="middle" font-family="Liberation Sans,sans-serif" font-weight="bold" font-size="7.2" fill="#e0e0e0" textLength="24.5" lengthAdjust="spacingAndGlyphs">CROSS</text><path d="M17.8 10 H40.8 V30.4 L25.6 37.3 M40.8 10 L25.6 16.9 M17.8 10 L4.1 16.9" fill="none" stroke="#e0e0e0" stroke-width="1.2"/><path d="M4.1 37.3 L17.8 30.4" fill="none" stroke="#e0e0e0" stroke-width="1" stroke-dasharray="1 1.5"/><path d="M13.3 12.6 H34.1 V33 H13.3 Z" fill="url(#stw)" stroke="#e0e0e0" stroke-width="0.8"/><path d="M4.1 16.9 H25.6 V37.3 H4.1 Z" fill="none" stroke="#e0e0e0" stroke-width="1.3"/><text x="23" y="43.8" text-anchor="middle" font-family="Liberation Sans,sans-serif" font-weight="bold" font-size="7.2" fill="#e0e0e0" textLength="30.4" lengthAdjust="spacingAndGlyphs">SECTION</text></g><rect x="718" y="336" width="46" height="48" fill="#8c8c8c"/><rect x="719" y="337" width="44" height="46" fill="#666666"/><g transform="translate(718,336)"><text x="23" y="8.8" text-anchor="middle" font-family="Liberation Sans,sans-serif" font-weight="bold" font-size="7.2" fill="#e0e0e0" textLength="24.5" lengthAdjust="spacingAndGlyphs">CROSS</text><path d="M17.8 10 H40.8 V30.4 L25.6 37.3 M40.8 10 L25.6 16.9 M17.8 10 L4.1 16.9" fill="none" stroke="#e0e0e0" stroke-width="1.2"/><path d="M4.1 37.3 L17.8 30.4" fill="none" stroke="#e0e0e0" stroke-width="1" stroke-dasharray="1 1.5"/><path d="M13.3 12.6 H34.1 V33 H13.3 Z" fill="url(#stw)" stroke="#e0e0e0" stroke-width="0.8"/><path d="M4.1 16.9 H25.6 V37.3 H4.1 Z" fill="none" stroke="#e0e0e0" stroke-width="1.3"/><text x="23" y="43.8" text-anchor="middle" font-family="Liberation Sans,sans-serif" font-weight="bold" font-size="7.2" fill="#e0e0e0" textLength="30.4" lengthAdjust="spacingAndGlyphs">SECTION</text></g></g></svg>
<div class="b" style="left:1051px;top:412px;width:84px;height:1px;background:#9a9a9a;"></div>
<div class="b" style="left:1051px;top:719px;width:84px;height:1px;background:#9a9a9a;"></div>
<div class="b" style="left:1135px;top:420px;width:6px;height:287px;background:#fff;background-image:repeating-conic-gradient(#fff 0 25%,#888 0 50%);background-size:2px 2px;"></div>
<div class="b" style="left:1136px;top:421px;width:4px;height:285px;background:#fff;"></div>
<svg style="left:575px;top:387px" width="559" height="383" viewBox="575 387 559 383" shape-rendering="crispEdges"><defs><pattern id="sty" width="2" height="2" patternUnits="userSpaceOnUse"><rect width="1" height="1" fill="#ffff00"/><rect x="1" y="1" width="1" height="1" fill="#ffff00"/></pattern><pattern id="stw" width="2" height="2" patternUnits="userSpaceOnUse"><rect width="1" height="1" fill="#e0e0e0"/><rect x="1" y="1" width="1" height="1" fill="#e0e0e0"/></pattern></defs><polygon points="628.0,591.0 680.0,591.0 680.0,609.0 895.5,609.0 895.5,683.0 628.0,683.0" fill="#d89860"/><polygon points="628.0,669.0 640.0,664.0 651.0,660.0 666.0,656.4 681.0,654.0 694.0,654.0 706.0,655.0 722.0,656.4 736.0,658.5 744.0,661.0 751.0,665.0 760.0,670.4 768.5,676.0 778.5,683.0 628.0,683.0" fill="#ffb020"/><path d="M624.5 413.5 H1050.5 V695.5 H624.5 Z" fill="none" stroke="#fff" stroke-width="1"/><path d="M624.5 667.5 h11 M1050.5 667.5 h-11 M624.5 639.5 h11 M1050.5 639.5 h-11 M624.5 610.5 h11 M1050.5 610.5 h-11 M624.5 582.5 h11 M1050.5 582.5 h-11 M624.5 554.5 h11 M1050.5 554.5 h-11 M624.5 526.5 h11 M1050.5 526.5 h-11 M624.5 498.5 h11 M1050.5 498.5 h-11 M624.5 469.5 h11 M1050.5 469.5 h-11 M624.5 441.5 h11 M1050.5 441.5 h-11 M677.5 413.5 v7 M677.5 695.5 v-7 M730.5 413.5 v7 M730.5 695.5 v-7 M784.5 413.5 v7 M784.5 695.5 v-7 M837.5 413.5 v7 M837.5 695.5 v-7 M890.5 413.5 v7 M890.5 695.5 v-7 M944.5 413.5 v7 M944.5 695.5 v-7 M997.5 413.5 v7 M997.5 695.5 v-7 " stroke="#fff" stroke-width="1" fill="none"/><rect x="1052" y="436" width="10" height="11" fill="#ff0000"/><rect x="1052" y="447" width="10" height="11" fill="#dd0000"/><rect x="1052" y="458" width="10" height="11" fill="#990000"/><rect x="1052" y="469" width="10" height="11" fill="#dd5500"/><rect x="1052" y="480" width="10" height="11" fill="#ff7700"/><rect x="1052" y="491" width="10" height="11" fill="#ff5555"/><rect x="1052" y="502" width="10" height="11" fill="#ff8888"/><rect x="1052" y="513" width="10" height="11" fill="#ffbbbb"/><rect x="1052" y="524" width="10" height="11" fill="#ffff00"/><rect x="1052" y="535" width="10" height="11" fill="#ffb020"/><rect x="1052" y="546" width="10" height="11" fill="#d89860"/><rect x="1052" y="557" width="10" height="11" fill="#aa5010"/><rect x="1052" y="568" width="10" height="11" fill="#b0b0b0"/><rect x="1052" y="579" width="10" height="11" fill="#0a4a1a"/><rect x="1052" y="590" width="10" height="11" fill="#088a18"/><rect x="1052" y="601" width="10" height="11" fill="#0aa520"/><rect x="1052" y="612" width="10" height="11" fill="#00ff20"/><rect x="1052" y="623" width="10" height="11" fill="#00bbff"/><rect x="1052" y="634" width="10" height="11" fill="#0077ff"/><rect x="1052" y="645" width="10" height="11" fill="#0010d0"/><rect x="1052" y="656" width="10" height="11" fill="#0010a0"/><rect x="1052" y="667" width="10" height="11" fill="#000080"/><rect x="1052" y="678" width="10" height="11" fill="#8888bb"/><rect x="1052" y="689" width="10" height="11" fill="#555580"/><rect x="1052" y="700" width="10" height="11" fill="#707070"/><g shape-rendering="auto"><rect x="579" y="720" width="46" height="48" fill="#8c8c8c"/><rect x="580" y="721" width="44" height="46" fill="#191970"/><g transform="translate(579,720)"><path d="M7 12.6 C9 9 13 7.5 16.8 7.7 C21 7.9 24 10.6 28 11.6 C32 12.6 35.5 11.8 38 9.2" fill="none" stroke="#ffff00" stroke-width="2"/><path d="M37.8 9.6 C32 15.5 25 19 21 23 C16 28 12 33.5 6.3 39.6" fill="none" stroke="#ffff00" stroke-width="2"/><path d="M6.4 39.6 C9 37.6 12 36.7 16 36.7 C21 36.7 24 38.6 27 39.6 C31 41 35.5 39.6 38.8 35.2" fill="none" stroke="#ffff00" stroke-width="2.3"/></g><rect x="626" y="720" width="46" height="48" fill="#8c8c8c"/><rect x="627" y="721" width="44" height="46" fill="#191970"/><g transform="translate(626,720)"><text x="23" y="8.8" text-anchor="middle" font-family="Liberation Sans,sans-serif" font-weight="bold" font-size="7.2" fill="#ffff00" textLength="24.5" lengthAdjust="spacingAndGlyphs">CROSS</text><path d="M17.8 10 H40.8 V30.4 L25.6 37.3 M40.8 10 L25.6 16.9 M17.8 10 L4.1 16.9" fill="none" stroke="#ffff00" stroke-width="1.2"/><path d="M4.1 37.3 L17.8 30.4" fill="none" stroke="#ffff00" stroke-width="1" stroke-dasharray="1 1.5"/><path d="M13.3 12.6 H34.1 V33 H13.3 Z" fill="url(#sty)" stroke="#ffff00" stroke-width="0.8"/><path d="M4.1 16.9 H25.6 V37.3 H4.1 Z" fill="none" stroke="#ffff00" stroke-width="1.3"/><text x="23" y="43.8" text-anchor="middle" font-family="Liberation Sans,sans-serif" font-weight="bold" font-size="7.2" fill="#ffff00" textLength="30.4" lengthAdjust="spacingAndGlyphs">SECTION</text></g><rect x="673" y="720" width="46" height="48" fill="#8c8c8c"/><rect x="674" y="721" width="44" height="46" fill="#666666"/><g transform="translate(673,720)"><text x="23" y="8.8" text-anchor="middle" font-family="Liberation Sans,sans-serif" font-weight="bold" font-size="7.2" fill="#e0e0e0" textLength="24.5" lengthAdjust="spacingAndGlyphs">CROSS</text><path d="M17.8 10 H40.8 V30.4 L25.6 37.3 M40.8 10 L25.6 16.9 M17.8 10 L4.1 16.9" fill="none" stroke="#e0e0e0" stroke-width="1.2"/><path d="M4.1 37.3 L17.8 30.4" fill="none" stroke="#e0e0e0" stroke-width="1" stroke-dasharray="1 1.5"/><path d="M13.3 12.6 H34.1 V33 H13.3 Z" fill="url(#stw)" stroke="#e0e0e0" stroke-width="0.8"/><path d="M4.1 16.9 H25.6 V37.3 H4.1 Z" fill="none" stroke="#e0e0e0" stroke-width="1.3"/><text x="23" y="43.8" text-anchor="middle" font-family="Liberation Sans,sans-serif" font-weight="bold" font-size="7.2" fill="#e0e0e0" textLength="30.4" lengthAdjust="spacingAndGlyphs">SECTION</text></g><rect x="720" y="720" width="46" height="48" fill="#8c8c8c"/><rect x="721" y="721" width="44" height="46" fill="#666666"/><g transform="translate(720,720)"><text x="23" y="8.8" text-anchor="middle" font-family="Liberation Sans,sans-serif" font-weight="bold" font-size="7.2" fill="#e0e0e0" textLength="24.5" lengthAdjust="spacingAndGlyphs">CROSS</text><path d="M17.8 10 H40.8 V30.4 L25.6 37.3 M40.8 10 L25.6 16.9 M17.8 10 L4.1 16.9" fill="none" stroke="#e0e0e0" stroke-width="1.2"/><path d="M4.1 37.3 L17.8 30.4" fill="none" stroke="#e0e0e0" stroke-width="1" stroke-dasharray="1 1.5"/><path d="M13.3 12.6 H34.1 V33 H13.3 Z" fill="url(#stw)" stroke="#e0e0e0" stroke-width="0.8"/><path d="M4.1 16.9 H25.6 V37.3 H4.1 Z" fill="none" stroke="#e0e0e0" stroke-width="1.3"/><text x="23" y="43.8" text-anchor="middle" font-family="Liberation Sans,sans-serif" font-weight="bold" font-size="7.2" fill="#e0e0e0" textLength="30.4" lengthAdjust="spacingAndGlyphs">SECTION</text></g></g></svg>
<span class="t k18" style="left:582.25px;top:6.16px;font-size:18px;color:#ffff00;letter-spacing:-0.109px;">1<span class="hy" style="transform:scaleX(1.9);margin:0 2.70px">-</span>aug<span class="hy" style="transform:scaleX(1.9);margin:0 2.70px">-</span>1997,23:05:00</span>
<span class="t k18" style="left:768.26px;top:6.16px;font-size:18px;color:#fff;letter-spacing:0.315px;">Planar cross<span class="hy" style="transform:scaleX(1.9);margin:0 2.70px">-</span>section plot.  Contour of</span>
<span class="t k18" style="left:581.53px;top:32.96px;font-size:18px;color:#fff;letter-spacing:0.164px;">maxdz using: rhb_3d.</span>
<span class="t k11" style="left:613.44px;top:303.24px;font-size:10px;color:#fff;">0</span>
<span class="t k11" style="left:613.44px;top:246.84px;font-size:10px;color:#fff;">4</span>
<span class="t k11" style="left:613.44px;top:190.44px;font-size:10px;color:#fff;">8</span>
<span class="t k11" style="left:607.88px;top:134.04px;font-size:10px;color:#fff;">12</span>
<span class="t k11" style="left:607.88px;top:77.64px;font-size:10px;color:#fff;">16</span>
<span class="t k11" style="left:607.88px;top:21.23px;font-size:10px;color:#fff;">20</span>
<span class="t k11" style="left:615.55px;top:314.44px;font-size:10px;color:#fff;">0.0</span>
<span class="t k11" style="left:722.05px;top:314.44px;font-size:10px;color:#fff;">4.2</span>
<span class="t k11" style="left:828.55px;top:314.44px;font-size:10px;color:#fff;">8.4</span>
<span class="t k11" style="left:932.27px;top:314.44px;font-size:10px;color:#fff;">12.6</span>
<span class="t" style="left:1039.00px;top:314.44px;font-size:10px;color:#fff;width:9.5px;overflow:hidden;">16</span>
<span class="t k11" style="left:802.20px;top:323.04px;font-size:10px;color:#fff;letter-spacing:0.173px;">Distance in km</span>
<span class="t" style="left:594.0px;top:218.0px;font-size:13px;color:#fff;font-family:'Liberation Mono',monospace;transform-origin:0 0;transform:rotate(-90deg);letter-spacing:0.15px;-webkit-text-stroke:0.2px #fff"><b>km</b> above MSL</span>
<span class="t k18" style="left:584.25px;top:390.16px;font-size:18px;color:#ffff00;letter-spacing:-0.109px;">1<span class="hy" style="transform:scaleX(1.9);margin:0 2.70px">-</span>aug<span class="hy" style="transform:scaleX(1.9);margin:0 2.70px">-</span>1997,23:05:00</span>
<span class="t k18" style="left:770.26px;top:390.16px;font-size:18px;color:#fff;letter-spacing:0.315px;">Planar cross<span class="hy" style="transform:scaleX(1.9);margin:0 2.70px">-</span>section plot.  Contour of</span>
<span class="t k18" style="left:583.33px;top:416.96px;font-size:18px;color:#fff;letter-spacing:0.264px;">radialvelocity using: rhb_3d.</span>
<span class="t k11" style="left:615.44px;top:687.23px;font-size:10px;color:#fff;">0</span>
<span class="t k11" style="left:615.44px;top:630.83px;font-size:10px;color:#fff;">4</span>
<span class="t k11" style="left:615.44px;top:574.43px;font-size:10px;color:#fff;">8</span>
<span class="t k11" style="left:609.88px;top:518.03px;font-size:10px;color:#fff;">12</span>
<span class="t k11" style="left:609.88px;top:461.63px;font-size:10px;color:#fff;">16</span>
<span class="t k11" style="left:609.88px;top:405.24px;font-size:10px;color:#fff;">20</span>
<span class="t k11" style="left:617.55px;top:698.43px;font-size:10px;color:#fff;">0.0</span>
<span class="t k11" style="left:724.05px;top:698.43px;font-size:10px;color:#fff;">4.2</span>
<span class="t k11" style="left:830.55px;top:698.43px;font-size:10px;color:#fff;">8.4</span>
<span class="t k11" style="left:934.27px;top:698.43px;font-size:10px;color:#fff;">12.6</span>
<span class="t" style="left:1041.00px;top:698.43px;font-size:10px;color:#fff;width:9.5px;overflow:hidden;">16</span>
<span class="t k11" style="left:804.20px;top:707.03px;font-size:10px;color:#fff;letter-spacing:0.173px;">Distance in km</span>
<span class="t" style="left:596.0px;top:602.0px;font-size:13px;color:#fff;font-family:'Liberation Mono',monospace;transform-origin:0 0;transform:rotate(-90deg);letter-spacing:0.15px;-webkit-text-stroke:0.2px #fff"><b>km</b> above MSL</span>
<span class="t k11" style="left:1050.15px;top:34.97px;font-size:11.5px;color:#fff;letter-spacing:0.174px;">maxdz</span>
<span class="t k11" style="left:1065.18px;top:54.60px;font-size:12.4px;color:#fff;letter-spacing:-0.201px;">62.5</span>
<span class="t k11" style="left:1065.30px;top:71.60px;font-size:12.4px;color:#fff;letter-spacing:-0.242px;">57.5</span>
<span class="t k11" style="left:1065.30px;top:88.60px;font-size:12.4px;color:#fff;letter-spacing:-0.242px;">52.5</span>
<span class="t k11" style="left:1065.55px;top:105.60px;font-size:12.4px;color:#fff;letter-spacing:-0.325px;">47.5</span>
<span class="t k11" style="left:1065.55px;top:122.60px;font-size:12.4px;color:#fff;letter-spacing:-0.325px;">42.5</span>
<span class="t k11" style="left:1065.37px;top:139.60px;font-size:12.4px;color:#fff;letter-spacing:-0.263px;">37.5</span>
<span class="t k11" style="left:1065.37px;top:156.60px;font-size:12.4px;color:#fff;letter-spacing:-0.263px;">32.5</span>
<span class="t k11" style="left:1065.18px;top:173.60px;font-size:12.4px;color:#fff;letter-spacing:-0.201px;">27.5</span>
<span class="t k11" style="left:1065.18px;top:190.60px;font-size:12.4px;color:#fff;letter-spacing:-0.201px;">22.5</span>
<span class="t k11" style="left:1064.87px;top:207.60px;font-size:12.4px;color:#fff;letter-spacing:-0.097px;">17.5</span>
<span class="t k11" style="left:1064.87px;top:224.60px;font-size:12.4px;color:#fff;letter-spacing:-0.097px;">12.5</span>
<span class="t k11" style="left:1065.18px;top:241.60px;font-size:12.4px;color:#fff;letter-spacing:-0.210px;">7.5</span>
<span class="t k11" style="left:1065.18px;top:258.60px;font-size:12.4px;color:#fff;letter-spacing:-0.210px;">2.5</span>
<span class="t k11" style="left:1064.86px;top:275.60px;font-size:12.4px;color:#fff;letter-spacing:0.047px;"><span class="hy" style="transform:scaleX(1.9);margin:0 1.86px">-</span>2.5</span>
<span class="t k11" style="left:1064.86px;top:292.60px;font-size:12.4px;color:#fff;letter-spacing:0.047px;"><span class="hy" style="transform:scaleX(1.9);margin:0 1.86px">-</span>7.5</span>
<span class="t k11" style="left:1064.86px;top:309.60px;font-size:12.4px;color:#fff;letter-spacing:-0.050px;"><span class="hy" style="transform:scaleX(1.9);margin:0 1.86px">-</span>12.5</span>
<span class="t k11" style="left:1052.15px;top:418.77px;font-size:11.5px;color:#fff;letter-spacing:0.660px;">radialvelocity</span>
<span class="t k11" style="left:1067.18px;top:435.40px;font-size:12.4px;color:#fff;letter-spacing:-0.221px;">24.0</span>
<span class="t k11" style="left:1067.18px;top:446.40px;font-size:12.4px;color:#fff;letter-spacing:-0.221px;">22.0</span>
<span class="t k11" style="left:1067.18px;top:457.40px;font-size:12.4px;color:#fff;letter-spacing:-0.221px;">20.0</span>
<span class="t k11" style="left:1066.87px;top:468.40px;font-size:12.4px;color:#fff;letter-spacing:-0.118px;">18.0</span>
<span class="t k11" style="left:1066.87px;top:479.40px;font-size:12.4px;color:#fff;letter-spacing:-0.118px;">16.0</span>
<span class="t k11" style="left:1066.87px;top:490.40px;font-size:12.4px;color:#fff;letter-spacing:-0.118px;">14.0</span>
<span class="t k11" style="left:1066.87px;top:501.40px;font-size:12.4px;color:#fff;letter-spacing:-0.118px;">12.0</span>
<span class="t k11" style="left:1066.87px;top:512.40px;font-size:12.4px;color:#fff;letter-spacing:-0.118px;">10.0</span>
<span class="t k11" style="left:1067.30px;top:523.40px;font-size:12.4px;color:#fff;letter-spacing:-0.303px;">8.0</span>
<span class="t k11" style="left:1067.18px;top:534.40px;font-size:12.4px;color:#fff;letter-spacing:-0.241px;">6.0</span>
<span class="t k11" style="left:1067.55px;top:545.40px;font-size:12.4px;color:#fff;letter-spacing:-0.427px;">4.0</span>
<span class="t k11" style="left:1067.18px;top:556.40px;font-size:12.4px;color:#fff;letter-spacing:-0.241px;">2.0</span>
<span class="t k11" style="left:1067.37px;top:567.40px;font-size:12.4px;color:#fff;letter-spacing:-0.334px;">0.0</span>
<span class="t k11" style="left:1066.86px;top:578.40px;font-size:12.4px;color:#fff;letter-spacing:0.016px;"><span class="hy" style="transform:scaleX(1.9);margin:0 1.86px">-</span>2.0</span>
<span class="t k11" style="left:1066.86px;top:589.40px;font-size:12.4px;color:#fff;letter-spacing:0.016px;"><span class="hy" style="transform:scaleX(1.9);margin:0 1.86px">-</span>4.0</span>
<span class="t k11" style="left:1066.86px;top:600.40px;font-size:12.4px;color:#fff;letter-spacing:0.016px;"><span class="hy" style="transform:scaleX(1.9);margin:0 1.86px">-</span>6.0</span>
<span class="t k11" style="left:1066.86px;top:611.40px;font-size:12.4px;color:#fff;letter-spacing:0.016px;"><span class="hy" style="transform:scaleX(1.9);margin:0 1.86px">-</span>8.0</span>
<span class="t k11" style="left:1066.86px;top:622.40px;font-size:12.4px;color:#fff;letter-spacing:-0.071px;"><span class="hy" style="transform:scaleX(1.9);margin:0 1.86px">-</span>10.0</span>
<span class="t k11" style="left:1066.86px;top:633.40px;font-size:12.4px;color:#fff;letter-spacing:-0.071px;"><span class="hy" style="transform:scaleX(1.9);margin:0 1.86px">-</span>12.0</span>
<span class="t k11" style="left:1066.86px;top:644.40px;font-size:12.4px;color:#fff;letter-spacing:-0.071px;"><span class="hy" style="transform:scaleX(1.9);margin:0 1.86px">-</span>14.0</span>
<span class="t k11" style="left:1066.86px;top:655.40px;font-size:12.4px;color:#fff;letter-spacing:-0.071px;"><span class="hy" style="transform:scaleX(1.9);margin:0 1.86px">-</span>16.0</span>
<span class="t k11" style="left:1066.86px;top:666.40px;font-size:12.4px;color:#fff;letter-spacing:-0.071px;"><span class="hy" style="transform:scaleX(1.9);margin:0 1.86px">-</span>18.0</span>
<span class="t k11" style="left:1066.86px;top:677.40px;font-size:12.4px;color:#fff;letter-spacing:-0.071px;"><span class="hy" style="transform:scaleX(1.9);margin:0 1.86px">-</span>20.0</span>
<span class="t k11" style="left:1066.86px;top:688.40px;font-size:12.4px;color:#fff;letter-spacing:-0.071px;"><span class="hy" style="transform:scaleX(1.9);margin:0 1.86px">-</span>22.0</span>
<span class="t k11" style="left:1066.86px;top:699.40px;font-size:12.4px;color:#fff;letter-spacing:-0.071px;"><span class="hy" style="transform:scaleX(1.9);margin:0 1.86px">-</span>24.0</span>
<div class="b" style="left:488px;top:458px;width:86px;height:1px;background:#9a9a9a;"></div>
<div class="b" style="left:488px;top:626px;width:86px;height:1px;background:#9a9a9a;"></div>
<div class="b" style="left:488px;top:794px;width:86px;height:1px;background:#9a9a9a;"></div>
<div class="b" style="left:488px;top:819px;width:86px;height:1px;background:#9a9a9a;"></div>
<svg style="left:5px;top:427px" width="569" height="444" viewBox="5 427 569 444"><defs><pattern id="sty" width="2" height="2" patternUnits="userSpaceOnUse"><rect width="1" height="1" fill="#ffff00"/><rect x="1" y="1" width="1" height="1" fill="#ffff00"/></pattern><pattern id="stw" width="2" height="2" patternUnits="userSpaceOnUse"><rect width="1" height="1" fill="#e0e0e0"/><rect x="1" y="1" width="1" height="1" fill="#e0e0e0"/></pattern></defs><defs><clipPath id="pc"><rect x="55" y="458" width="431.5" height="337.5"/></clipPath></defs><g clip-path="url(#pc)"><g shape-rendering="crispEdges"><rect x="291.3" y="480.3" width="7.7" height="4.7" fill="#00e890"/><rect x="264.0" y="499.0" width="8.0" height="2.0" fill="#00e890"/><rect x="258.0" y="501.0" width="6.0" height="2.0" fill="#00e890"/><rect x="264.0" y="501.0" width="8.0" height="2.0" fill="#007048"/><rect x="272.0" y="501.0" width="2.0" height="2.0" fill="#00e890"/><rect x="258.0" y="503.0" width="2.0" height="2.0" fill="#00e890"/><rect x="260.0" y="503.0" width="12.0" height="2.0" fill="#007048"/><rect x="272.0" y="503.0" width="2.0" height="2.0" fill="#00e890"/><rect x="260.0" y="505.0" width="6.0" height="2.0" fill="#007048"/><rect x="266.0" y="505.0" width="6.0" height="2.0" fill="#00e890"/><rect x="260.0" y="507.0" width="4.0" height="2.0" fill="#007048"/><rect x="264.0" y="507.0" width="8.0" height="2.0" fill="#00e890"/><rect x="260.0" y="509.0" width="12.0" height="2.0" fill="#00e890"/><rect x="260.0" y="511.0" width="2.0" height="2.0" fill="#00e890"/><rect x="264.0" y="511.0" width="8.0" height="2.0" fill="#00e890"/><rect x="264.0" y="513.0" width="6.0" height="2.0" fill="#00e890"/><rect x="264.0" y="515.0" width="6.0" height="2.0" fill="#00e890"/><rect x="282.0" y="515.0" width="10.0" height="2.0" fill="#00e890"/><rect x="284.0" y="517.0" width="8.0" height="2.0" fill="#00e890"/><rect x="284.0" y="519.0" width="10.0" height="2.0" fill="#00e890"/><rect x="276.0" y="521.0" width="16.0" height="2.0" fill="#00e890"/><rect x="298.0" y="521.0" width="8.0" height="2.0" fill="#00e890"/><rect x="268.0" y="523.0" width="30.0" height="2.0" fill="#00e890"/><rect x="280.0" y="523.0" width="4.0" height="2.0" fill="#007048"/><rect x="298.0" y="523.0" width="8.0" height="2.0" fill="#00e890"/><rect x="268.0" y="525.0" width="30.0" height="2.0" fill="#00e890"/><rect x="280.0" y="525.0" width="4.0" height="2.0" fill="#007048"/><rect x="298.0" y="525.0" width="8.0" height="2.0" fill="#00e890"/><rect x="264.0" y="527.0" width="16.0" height="2.0" fill="#007048"/><rect x="280.0" y="527.0" width="6.0" height="2.0" fill="#c8c8c8"/><rect x="284.0" y="527.0" width="4.0" height="2.0" fill="#007048"/><rect x="288.0" y="527.0" width="10.0" height="2.0" fill="#00e890"/><rect x="258.0" y="529.0" width="6.0" height="2.0" fill="#00e890"/><rect x="264.0" y="529.0" width="6.0" height="2.0" fill="#007048"/><rect x="268.0" y="529.0" width="10.0" height="2.0" fill="#c8c8c8"/><rect x="278.0" y="529.0" width="2.0" height="2.0" fill="#007048"/><rect x="280.0" y="529.0" width="6.0" height="2.0" fill="#c8c8c8"/><rect x="286.0" y="529.0" width="12.0" height="2.0" fill="#00e890"/><rect x="258.0" y="531.0" width="6.0" height="2.0" fill="#00e890"/><rect x="264.0" y="531.0" width="6.0" height="2.0" fill="#007048"/><rect x="268.0" y="531.0" width="10.0" height="2.0" fill="#c8c8c8"/><rect x="276.0" y="531.0" width="4.0" height="2.0" fill="#007048"/><rect x="280.0" y="531.0" width="18.0" height="2.0" fill="#00e890"/><rect x="258.0" y="533.0" width="6.0" height="2.0" fill="#00e890"/><rect x="264.0" y="533.0" width="6.0" height="2.0" fill="#007048"/><rect x="268.0" y="533.0" width="10.0" height="2.0" fill="#c8c8c8"/><rect x="276.0" y="533.0" width="4.0" height="2.0" fill="#007048"/><rect x="280.0" y="533.0" width="18.0" height="2.0" fill="#00e890"/><rect x="258.0" y="535.0" width="2.0" height="2.0" fill="#00e890"/><rect x="260.0" y="535.0" width="14.0" height="2.0" fill="#007048"/><rect x="274.0" y="535.0" width="18.0" height="2.0" fill="#00e890"/><rect x="258.0" y="537.0" width="2.0" height="2.0" fill="#00e890"/><rect x="260.0" y="537.0" width="10.0" height="2.0" fill="#007048"/><rect x="270.0" y="537.0" width="14.0" height="2.0" fill="#00e890"/><rect x="284.0" y="537.0" width="8.0" height="2.0" fill="#007048"/><rect x="292.0" y="537.0" width="2.0" height="2.0" fill="#00e890"/><rect x="258.0" y="539.0" width="8.0" height="2.0" fill="#00e890"/><rect x="270.0" y="539.0" width="14.0" height="2.0" fill="#00e890"/><rect x="284.0" y="539.0" width="8.0" height="2.0" fill="#007048"/><rect x="292.0" y="539.0" width="2.0" height="2.0" fill="#00e890"/><rect x="294.0" y="539.0" width="4.0" height="2.0" fill="#007048"/><rect x="258.0" y="541.0" width="8.0" height="2.0" fill="#00e890"/><rect x="270.0" y="541.0" width="4.0" height="2.0" fill="#00b0e0"/><rect x="274.0" y="541.0" width="10.0" height="2.0" fill="#00e890"/><rect x="284.0" y="541.0" width="8.0" height="2.0" fill="#007048"/><rect x="292.0" y="541.0" width="2.0" height="2.0" fill="#00e890"/><rect x="294.0" y="541.0" width="4.0" height="2.0" fill="#007048"/><rect x="270.0" y="543.0" width="8.0" height="2.0" fill="#00e890"/><rect x="278.0" y="543.0" width="2.0" height="2.0" fill="#007048"/><rect x="280.0" y="543.0" width="14.0" height="2.0" fill="#00e890"/><rect x="294.0" y="543.0" width="4.0" height="2.0" fill="#007048"/><rect x="302.0" y="543.0" width="10.0" height="2.0" fill="#00e890"/><rect x="316.0" y="543.0" width="4.0" height="2.0" fill="#00e890"/><rect x="270.0" y="545.0" width="4.0" height="2.0" fill="#00e890"/><rect x="274.0" y="545.0" width="8.0" height="2.0" fill="#007048"/><rect x="282.0" y="545.0" width="8.0" height="2.0" fill="#c8c8c8"/><rect x="290.0" y="545.0" width="4.0" height="2.0" fill="#007048"/><rect x="294.0" y="545.0" width="8.0" height="2.0" fill="#00e890"/><rect x="302.0" y="545.0" width="4.0" height="2.0" fill="#00b0e0"/><rect x="304.0" y="545.0" width="8.0" height="2.0" fill="#00e890"/><rect x="316.0" y="545.0" width="6.0" height="2.0" fill="#00e890"/><rect x="270.0" y="547.0" width="4.0" height="2.0" fill="#00e890"/><rect x="274.0" y="547.0" width="8.0" height="2.0" fill="#007048"/><rect x="282.0" y="547.0" width="8.0" height="2.0" fill="#c8c8c8"/><rect x="290.0" y="547.0" width="4.0" height="2.0" fill="#007048"/><rect x="294.0" y="547.0" width="8.0" height="2.0" fill="#00e890"/><rect x="302.0" y="547.0" width="4.0" height="2.0" fill="#00b0e0"/><rect x="306.0" y="547.0" width="8.0" height="2.0" fill="#00e890"/><rect x="314.0" y="547.0" width="8.0" height="2.0" fill="#00e890"/><rect x="270.0" y="549.0" width="4.0" height="2.0" fill="#00e890"/><rect x="274.0" y="549.0" width="6.0" height="2.0" fill="#007048"/><rect x="280.0" y="549.0" width="6.0" height="2.0" fill="#00e890"/><rect x="284.0" y="549.0" width="10.0" height="2.0" fill="#007048"/><rect x="294.0" y="549.0" width="14.0" height="2.0" fill="#00e890"/><rect x="308.0" y="549.0" width="4.0" height="2.0" fill="#007048"/><rect x="312.0" y="549.0" width="10.0" height="2.0" fill="#00e890"/><rect x="280.0" y="551.0" width="12.0" height="2.0" fill="#00e890"/><rect x="290.0" y="551.0" width="4.0" height="2.0" fill="#00b0e0"/><rect x="294.0" y="551.0" width="24.0" height="2.0" fill="#00e890"/><rect x="280.0" y="553.0" width="4.0" height="2.0" fill="#00b0e0"/><rect x="284.0" y="553.0" width="8.0" height="2.0" fill="#00e890"/><rect x="290.0" y="553.0" width="4.0" height="2.0" fill="#00b0e0"/><rect x="294.0" y="553.0" width="22.0" height="2.0" fill="#00e890"/><rect x="284.0" y="555.0" width="6.0" height="2.0" fill="#00b0e0"/><rect x="294.0" y="555.0" width="4.0" height="2.0" fill="#00b0e0"/><rect x="296.0" y="555.0" width="4.0" height="2.0" fill="#00e890"/><rect x="300.0" y="555.0" width="2.0" height="2.0" fill="#007048"/><rect x="302.0" y="555.0" width="10.0" height="2.0" fill="#00e890"/><rect x="292.0" y="557.0" width="4.0" height="2.0" fill="#00b0e0"/><rect x="300.0" y="557.0" width="10.0" height="2.0" fill="#00e890"/><rect x="308.0" y="557.0" width="4.0" height="2.0" fill="#00b0e0"/><rect x="361.3" y="523.7" width="10.7" height="8.3" fill="#00e890"/><rect x="361.3" y="524.7" width="7.0" height="7.3" fill="#007048"/><polygon points="251.7,562.5 258.3,562.5 260.0,565.8 265.0,565.0 265.8,568.3 275.0,570.0 285.0,573.3 289.2,576.7 290.0,581.7 298.3,585.0 305.0,585.8 304.2,590.0 293.3,588.7 285.8,585.0 283.3,580.0 275.0,578.3 268.3,576.7 259.2,577.5 249.2,575.0 248.0,570.0 251.7,568.3" fill="#00b0e0"/><polygon points="259.2,565.8 264.7,567.5 275.0,571.7 283.3,575.0 284.2,579.2 275.0,577.5 268.3,575.0 260.0,575.8 254.2,573.3 255.8,568.3" fill="#00e890"/><rect x="273.7" y="560.8" width="6.3" height="4.2" fill="#00b0e0"/><rect x="262.5" y="589.2" width="3.3" height="6.7" fill="#0068e0"/><rect x="270.0" y="594.2" width="7.5" height="3.3" fill="#0068e0"/><rect x="277.5" y="596.7" width="5.8" height="3.3" fill="#0068e0"/><rect x="283.3" y="600.0" width="2.5" height="2.5" fill="#0068e0"/><rect x="223.0" y="552.7" width="1.0" height="1.0" fill="#00b0e0"/><rect x="341.2" y="625.2" width="4.8" height="2.2" fill="#007048"/><rect x="339.0" y="627.0" width="2.2" height="1.0" fill="#00e890"/><rect x="339.0" y="631.0" width="2.2" height="2.0" fill="#00e890"/><rect x="341.2" y="631.2" width="4.8" height="1.8" fill="#007048"/><rect x="339.0" y="636.0" width="2.0" height="2.0" fill="#007048"/><rect x="341.0" y="636.2" width="6.0" height="1.8" fill="#c8c8c8"/><rect x="347.0" y="636.0" width="3.0" height="2.0" fill="#007048"/><rect x="350.0" y="636.2" width="2.0" height="1.8" fill="#c8c8c8"/><rect x="352.0" y="636.0" width="3.0" height="2.0" fill="#007048"/><rect x="339.0" y="638.0" width="2.0" height="6.0" fill="#c8c8c8"/><rect x="341.0" y="638.0" width="6.0" height="6.0" fill="#eeb020"/><rect x="347.0" y="638.0" width="3.0" height="6.0" fill="#c8c8c8"/><rect x="350.0" y="638.0" width="5.0" height="3.0" fill="#ee9820"/><rect x="350.0" y="641.0" width="2.0" height="3.0" fill="#ee9820"/><rect x="355.0" y="638.0" width="3.0" height="3.0" fill="#00e890"/><rect x="358.0" y="638.0" width="3.0" height="3.0" fill="#007048"/><rect x="339.0" y="644.0" width="2.0" height="3.0" fill="#007048"/><rect x="341.0" y="644.0" width="6.0" height="3.0" fill="#ee9820"/><rect x="352.0" y="641.0" width="9.0" height="8.0" fill="#c8c8c8"/><rect x="352.0" y="644.0" width="3.0" height="5.0" fill="#007048"/><rect x="361.0" y="641.0" width="3.0" height="6.0" fill="#007048"/><rect x="361.0" y="647.0" width="3.0" height="2.0" fill="#00e890"/><rect x="355.0" y="649.0" width="6.0" height="3.0" fill="#00e890"/><rect x="270.8" y="656.2" width="5.2" height="4.6" fill="#00b0e0"/><rect x="272.9" y="657.1" width="3.1" height="2.9" fill="#00e890"/><rect x="224.0" y="672.9" width="4.2" height="4.2" fill="#00b0e0"/><rect x="298.3" y="670.2" width="6.5" height="5.2" fill="#00e890"/><rect x="311.5" y="675.0" width="8.3" height="6.7" fill="#00e890"/><rect x="316.7" y="674.6" width="4.2" height="2.1" fill="#00b0e0"/><rect x="221.2" y="697.3" width="5.8" height="7.7" fill="#00e890"/><rect x="221.2" y="701.5" width="3.3" height="3.5" fill="#007048"/><rect x="267.0" y="597.0" width="2.0" height="1.7" fill="#0068e0"/><rect x="267.0" y="601.0" width="2.0" height="1.7" fill="#1040e0"/><rect x="267.0" y="604.3" width="2.0" height="1.7" fill="#1040e0"/><rect x="263.0" y="606.9" width="2.0" height="1.0" fill="#0068e0"/><rect x="257.8" y="608.0" width="1.2" height="2.0" fill="#0068e0"/><rect x="260.9" y="610.0" width="1.2" height="1.0" fill="#1040e0"/><rect x="266.9" y="610.0" width="2.0" height="1.0" fill="#7010f0"/><rect x="265.0" y="613.0" width="1.7" height="3.7" fill="#7010f0"/><rect x="267.0" y="615.3" width="2.0" height="1.7" fill="#4020e0"/><rect x="250.9" y="614.0" width="1.2" height="1.0" fill="#1040e0"/><rect x="256.0" y="614.3" width="2.7" height="3.0" fill="#4020e0"/><rect x="252.0" y="617.0" width="2.0" height="0.8" fill="#7010f0"/><rect x="248.0" y="620.0" width="3.0" height="1.7" fill="#1040e0"/><rect x="254.3" y="618.3" width="1.7" height="3.3" fill="#4020e0"/><rect x="251.7" y="621.3" width="4.0" height="5.3" fill="#4020e0"/><rect x="249.0" y="625.0" width="2.7" height="1.0" fill="#4020e0"/><rect x="253.7" y="625.7" width="4.7" height="6.7" fill="#4020e0"/><rect x="249.0" y="629.0" width="2.0" height="2.0" fill="#1040e0"/><rect x="247.0" y="631.0" width="1.0" height="1.0" fill="#1040e0"/><rect x="252.0" y="633.0" width="2.7" height="4.7" fill="#1040e0"/><rect x="255.7" y="632.3" width="11.3" height="3.3" fill="#4020e0"/><rect x="258.3" y="629.0" width="2.7" height="3.3" fill="#1040e0"/><rect x="267.0" y="631.0" width="3.3" height="1.7" fill="#4020e0"/><rect x="269.0" y="628.3" width="3.0" height="3.0" fill="#4020e0"/><rect x="271.7" y="626.3" width="1.7" height="2.7" fill="#7010f0"/><rect x="269.0" y="633.0" width="3.0" height="2.0" fill="#4020e0"/><rect x="273.0" y="633.3" width="1.0" height="1.7" fill="#1040e0"/><rect x="274.3" y="635.0" width="1.7" height="0.7" fill="#1040e0"/><rect x="261.7" y="621.7" width="4.0" height="1.3" fill="#7010f0"/><rect x="265.3" y="620.3" width="1.3" height="2.0" fill="#7010f0"/><rect x="273.0" y="620.0" width="1.0" height="1.0" fill="#7010f0"/><rect x="245.0" y="639.0" width="3.0" height="0.8" fill="#0068e0"/><rect x="251.0" y="638.0" width="1.0" height="1.0" fill="#1040e0"/><rect x="256.0" y="640.0" width="2.0" height="2.0" fill="#1040e0"/><rect x="258.0" y="639.0" width="1.0" height="0.8" fill="#1040e0"/><rect x="262.0" y="638.0" width="1.0" height="1.0" fill="#1040e0"/><rect x="269.0" y="638.0" width="1.0" height="1.0" fill="#1040e0"/><rect x="294.0" y="614.0" width="1.0" height="1.0" fill="#0068e0"/><rect x="267.0" y="620.0" width="1.0" height="0.7" fill="#ff0000"/><rect x="269.0" y="619.0" width="2.0" height="0.8" fill="#ff0000"/></g><g fill="none" stroke="#fff" stroke-width="1.1"><circle cx="263.5" cy="624.5" r="27.8"/><circle cx="263.5" cy="624.5" r="55.6"/><circle cx="263.5" cy="624.5" r="83.3"/><circle cx="263.5" cy="624.5" r="111.1"/><circle cx="263.5" cy="624.5" r="138.9"/><circle cx="263.5" cy="624.5" r="166.7"/><circle cx="263.5" cy="624.5" r="194.5"/><circle cx="263.5" cy="624.5" r="222.2"/><path d="M55 624.5 H235.7 M291.3 624.5 H486 M263.5 440 V596.7 M263.5 652.3 V810" shape-rendering="crispEdges"/><path d="M243.9 604.9 L106.4 467.4 M243.9 644.1 L106.4 781.6 M283.1 604.9 L420.6 467.4 M283.1 644.1 L420.6 781.6 "/></g><path d="M256 625.6 L285 625.7 L330 628.5 L428.8 635.1" stroke="#ff0000" stroke-width="3.2" fill="none"/><path d="M260 626.3 H269" stroke="#000" stroke-width="0.8" stroke-dasharray="1 1" fill="none"/><path d="M259.5 495.5 H270.5 M264.5 490 V501" stroke="#ffee94" stroke-width="1" shape-rendering="crispEdges"/><path d="M270.3 568.3 L268 578.3" stroke="#fff" stroke-width="1.4"/></g><rect x="490" y="485" width="10" height="7" fill="#ff8080" shape-rendering="crispEdges"/><rect x="490" y="492" width="10" height="7" fill="#ff9098" shape-rendering="crispEdges"/><rect x="490" y="499" width="10" height="7" fill="#ffb068" shape-rendering="crispEdges"/><rect x="490" y="506" width="10" height="7" fill="#ffd8b0" shape-rendering="crispEdges"/><rect x="490" y="513" width="10" height="7" fill="#ffd810" shape-rendering="crispEdges"/><rect x="490" y="520" width="10" height="7" fill="#eeb020" shape-rendering="crispEdges"/><rect x="490" y="527" width="10" height="7" fill="#dd9030" shape-rendering="crispEdges"/><rect x="490" y="534" width="10" height="7" fill="#c8c8c8" shape-rendering="crispEdges"/><rect x="490" y="541" width="10" height="7" fill="#007048" shape-rendering="crispEdges"/><rect x="490" y="548" width="10" height="7" fill="#00e890" shape-rendering="crispEdges"/><rect x="490" y="555" width="10" height="7" fill="#00b0e0" shape-rendering="crispEdges"/><rect x="490" y="562" width="10" height="7" fill="#0068e0" shape-rendering="crispEdges"/><rect x="490" y="569" width="10" height="7" fill="#1040e0" shape-rendering="crispEdges"/><rect x="490" y="576" width="10" height="7" fill="#4020e0" shape-rendering="crispEdges"/><rect x="490" y="583" width="10" height="7" fill="#7010f0" shape-rendering="crispEdges"/><rect x="490" y="590" width="10" height="7" fill="#9000ff" shape-rendering="crispEdges"/><rect x="490" y="653" width="10" height="7" fill="#ff8080" shape-rendering="crispEdges"/><rect x="490" y="660" width="10" height="7" fill="#ff9098" shape-rendering="crispEdges"/><rect x="490" y="667" width="10" height="7" fill="#ffb068" shape-rendering="crispEdges"/><rect x="490" y="674" width="10" height="7" fill="#ffd8b0" shape-rendering="crispEdges"/><rect x="490" y="681" width="10" height="7" fill="#ffd810" shape-rendering="crispEdges"/><rect x="490" y="688" width="10" height="7" fill="#eeb020" shape-rendering="crispEdges"/><rect x="490" y="695" width="10" height="7" fill="#dd9030" shape-rendering="crispEdges"/><rect x="490" y="702" width="10" height="7" fill="#c8c8c8" shape-rendering="crispEdges"/><rect x="490" y="709" width="10" height="7" fill="#007048" shape-rendering="crispEdges"/><rect x="490" y="716" width="10" height="7" fill="#00e890" shape-rendering="crispEdges"/><rect x="490" y="723" width="10" height="7" fill="#00b0e0" shape-rendering="crispEdges"/><rect x="490" y="730" width="10" height="7" fill="#0068e0" shape-rendering="crispEdges"/><rect x="490" y="737" width="10" height="7" fill="#1040e0" shape-rendering="crispEdges"/><rect x="490" y="744" width="10" height="7" fill="#4020e0" shape-rendering="crispEdges"/><rect x="490" y="751" width="10" height="7" fill="#7010f0" shape-rendering="crispEdges"/><rect x="490" y="758" width="10" height="7" fill="#9000ff" shape-rendering="crispEdges"/><rect x="10" y="821" width="46" height="48" fill="#8c8c8c"/><rect x="11" y="822" width="44" height="46" fill="#191970"/><g transform="translate(10,821)"><path d="M7 12.6 C9 9 13 7.5 16.8 7.7 C21 7.9 24 10.6 28 11.6 C32 12.6 35.5 11.8 38 9.2" fill="none" stroke="#ffff00" stroke-width="2"/><path d="M37.8 9.6 C32 15.5 25 19 21 23 C16 28 12 33.5 6.3 39.6" fill="none" stroke="#ffff00" stroke-width="2"/><path d="M6.4 39.6 C9 37.6 12 36.7 16 36.7 C21 36.7 24 38.6 27 39.6 C31 41 35.5 39.6 38.8 35.2" fill="none" stroke="#ffff00" stroke-width="2.3"/></g><rect x="57" y="821" width="46" height="48" fill="#8c8c8c"/><rect x="58" y="822" width="44" height="46" fill="#666666"/><g transform="translate(57,821)"><text x="3" y="15.1" font-family="Liberation Sans,sans-serif" font-weight="bold" font-size="15.4" fill="#e0e0e0" stroke="#e0e0e0" stroke-width="0.4" textLength="30" lengthAdjust="spacingAndGlyphs">GOES</text><path d="M3 17 L9 17 C15 19.6 20 24 22.5 28 C24 31 24.4 34 24 36 L22 44 L3 44 Z" fill="url(#stw)"/><path d="M3 17 L8 17 L7.4 19.4 L4.6 20.6 L3 20.2 Z M14 21 L17 20.5 L20 24 L23 28.5 L24 33 L21 33.5 L18.5 31 L16 31 L13.5 28 L15 25 Z M3 39 L6 37.3 L10.5 37.3 L12 39 L12 44 L3 44 Z M3 28 L5.4 28.4 L6.2 30.4 L4 31.2 L3 30.8 Z" fill="#e0e0e0"/><path d="M22.6 24.5 L38 22.2" stroke="#e0e0e0" stroke-width="1.1" stroke-dasharray="1 1" fill="none"/><path d="M24.3 31.5 L39 22.9" stroke="#e0e0e0" stroke-width="1.1" stroke-dasharray="1 1" fill="none"/><path d="M40.4 18.7 L43.2 21.5 L40.4 24.3 L37.6 21.5 Z" fill="#e0e0e0"/><rect x="19" y="16.8" width="1.1" height="1.1" fill="#e0e0e0"/><rect x="24" y="19.9" width="1.1" height="1.1" fill="#e0e0e0"/><rect x="31" y="19.9" width="1.1" height="1.1" fill="#e0e0e0"/><rect x="39" y="29.9" width="1.1" height="1.1" fill="#e0e0e0"/><rect x="34.9" y="31.8" width="1.1" height="1.1" fill="#e0e0e0"/><rect x="25" y="41.7" width="1.3" height="1.3" fill="#e0e0e0"/><text x="29.6" y="42.9" font-family="Liberation Sans,sans-serif" font-size="10.5" fill="#e0e0e0" textLength="9.6" lengthAdjust="spacingAndGlyphs">IR</text></g><rect x="104" y="821" width="46" height="48" fill="#8c8c8c"/><rect x="105" y="822" width="44" height="46" fill="#191970"/><g transform="translate(104,821)"><g transform="translate(0,0)"><path d="M5.6 9 C7 18 15 29 27 30.8" fill="none" stroke="#ffff00" stroke-width="2.2"/><path d="M12.6 20.8 H16.4 V24.6" fill="none" stroke="#ffff00" stroke-width="1"/><path d="M12.8 22 L14.4 24 L15.2 35 L16.2 39.6 L8.6 39.6 L9.6 35 Z" fill="#ffff00"/></g><text x="32.6" y="16.4" font-family="Liberation Sans,sans-serif" font-size="14" fill="#ffff00" textLength="6.4" lengthAdjust="spacingAndGlyphs">S</text><text x="32.6" y="27.8" font-family="Liberation Sans,sans-serif" font-size="14" fill="#ffff00" textLength="6.4" lengthAdjust="spacingAndGlyphs">U</text><text x="32.6" y="40" font-family="Liberation Sans,sans-serif" font-size="14" fill="#ffff00" textLength="6.4" lengthAdjust="spacingAndGlyphs">R</text></g><rect x="151" y="821" width="46" height="48" fill="#8c8c8c"/><rect x="152" y="822" width="44" height="46" fill="#191970"/><g transform="translate(151,821)"><rect x="4.0" y="5.0" width="1" height="38.0" fill="#ffff00"/><rect x="13.0" y="5.0" width="1" height="38.0" fill="#ffff00"/><rect x="22.0" y="5.0" width="1" height="38.0" fill="#ffff00"/><rect x="31.0" y="5.0" width="1" height="38.0" fill="#ffff00"/><rect x="40.0" y="5.0" width="1" height="38.0" fill="#ffff00"/><rect x="4.0" y="5.0" width="37.0" height="1" fill="#ffff00"/><rect x="4.0" y="14.0" width="37.0" height="1" fill="#ffff00"/><rect x="4.0" y="23.0" width="37.0" height="1" fill="#ffff00"/><rect x="4.0" y="32.0" width="37.0" height="1" fill="#ffff00"/><rect x="4.0" y="42.0" width="37.0" height="1" fill="#ffff00"/><g transform="translate(6.6,-0.4)"><path d="M5.6 9 C7 18 15 29 27 30.8" fill="none" stroke="#ffff00" stroke-width="2.2"/><path d="M12.6 20.8 H16.4 V24.6" fill="none" stroke="#ffff00" stroke-width="1"/><path d="M12.8 22 L14.4 24 L15.2 35 L16.2 39.6 L8.6 39.6 L9.6 35 Z" fill="#ffff00"/></g></g><rect x="198" y="821" width="14" height="48" fill="#8c8c8c"/><rect x="199" y="822" width="12" height="46" fill="#191970"/><g transform="translate(198,821)"><text x="7" y="11.4" text-anchor="middle" font-family="Liberation Sans,sans-serif" font-size="7.6" fill="#ffff00">B</text><text x="7" y="17.4" text-anchor="middle" font-family="Liberation Sans,sans-serif" font-size="7.6" fill="#ffff00">O</text><text x="7" y="23.4" text-anchor="middle" font-family="Liberation Sans,sans-serif" font-size="7.6" fill="#ffff00">U</text><text x="7" y="29.4" text-anchor="middle" font-family="Liberation Sans,sans-serif" font-size="7.6" fill="#ffff00">N</text><text x="7" y="35.4" text-anchor="middle" font-family="Liberation Sans,sans-serif" font-size="7.6" fill="#ffff00">D</text><text x="7" y="41.4" text-anchor="middle" font-family="Liberation Sans,sans-serif" font-size="7.6" fill="#ffff00">S</text></g><rect x="213" y="845" width="22" height="24" fill="#8c8c8c"/><rect x="214" y="846" width="20" height="22" fill="#191970"/><g transform="translate(213,845)"><rect x="3.0" y="4.0" width="1.2" height="16.2" fill="#ffff00"/><rect x="8.0" y="4.0" width="1.2" height="16.2" fill="#ffff00"/><rect x="13.0" y="4.0" width="1.2" height="16.2" fill="#ffff00"/><rect x="18.0" y="4.0" width="1.2" height="16.2" fill="#ffff00"/><rect x="3.0" y="4.0" width="16.2" height="1.2" fill="#ffff00"/><rect x="3.0" y="9.0" width="16.2" height="1.2" fill="#ffff00"/><rect x="3.0" y="14.0" width="16.2" height="1.2" fill="#ffff00"/><rect x="3.0" y="19.0" width="16.2" height="1.2" fill="#ffff00"/></g><rect x="236" y="821" width="21" height="48" fill="#8c8c8c"/><rect x="237" y="822" width="19" height="46" fill="#191970"/><g transform="translate(236,821)"><path d="M2.7 4.8 L5.8 4.2 L7.4 5 L6.1 6.9 L4.6 8.7 L4.4 11.2 L2.7 9.9 Z M2.7 13.8 L5.8 12.4 L6 15.2 L4.4 14.2 Z" fill="#ffff00"/><path d="M9.4 5.1 L11.6 4.6 L13.7 5.7 L15.4 4.2 L14.4 6.6 L13 8 L13.6 9.6 L16.2 11.6 L14.6 13.4 L14 15 L13 12 L12.4 9.6 L10.8 7.4 Z M16 4.2 L18 4 L16.8 5.8 Z" fill="#ffff00"/><text x="6.9" y="24.8" font-family="Liberation Sans,sans-serif" font-size="9.4" fill="#ffff00" stroke="#ffff00" stroke-width="0.3" textLength="6" lengthAdjust="spacingAndGlyphs">M</text><text x="6.9" y="32.9" font-family="Liberation Sans,sans-serif" font-size="9.4" fill="#ffff00" stroke="#ffff00" stroke-width="0.3" textLength="6" lengthAdjust="spacingAndGlyphs">A</text><text x="6.9" y="40.9" font-family="Liberation Sans,sans-serif" font-size="9.4" fill="#ffff00" stroke="#ffff00" stroke-width="0.3" textLength="6" lengthAdjust="spacingAndGlyphs">P</text></g><rect x="258" y="821" width="21" height="48" fill="#8c8c8c"/><rect x="259" y="822" width="19" height="46" fill="#191970"/><g transform="translate(258,821)"><ellipse cx="10.3" cy="23.3" rx="7.1" ry="9.2" fill="none" stroke="#ffff00" stroke-width="1.4"/><ellipse cx="10.3" cy="23.3" rx="5" ry="6.4" fill="none" stroke="#ffff00" stroke-width="1.4"/><ellipse cx="10.3" cy="23.3" rx="2.2" ry="2.6" fill="none" stroke="#ffff00" stroke-width="1.1"/><path d="M10.3 14.100000000000001 V20.7 M10.3 25.900000000000002 V32.5 M3.200000000000001 23.3 H8.100000000000001 M12.5 23.3 H17.4 M5.9 17.5 L8.8 21.400000000000002 M14.700000000000001 17.5 L11.8 21.400000000000002 M5.9 29.1 L8.8 25.2 M14.700000000000001 29.1 L11.8 25.2" stroke="#ffff00" stroke-width="1.1" fill="none"/></g><rect x="280" y="845" width="22" height="24" fill="#8c8c8c"/><rect x="281" y="846" width="20" height="22" fill="#191970"/><g transform="translate(280,845)"><circle cx="11.2" cy="11.6" r="7.2" fill="none" stroke="#ffff00" stroke-width="1.2"/></g><rect x="303" y="821" width="46" height="48" fill="#8c8c8c"/><rect x="304" y="822" width="44" height="46" fill="#191970"/><g transform="translate(303,821)"><path d="M6 32 H40 L37.2 38 H9.4 Z" fill="none" stroke="#ffff00" stroke-width="1.1"/><path d="M8 32 V24 H12 L14.6 32" fill="none" stroke="#ffff00" stroke-width="1.1"/><circle cx="22" cy="22.8" r="3" fill="none" stroke="#ffff00" stroke-width="1.1"/><path d="M21.2 26 V32 M22.8 26 V32" stroke="#ffff00" stroke-width="0.9"/><path d="M34.2 15.4 V32" stroke="#ffff00" stroke-width="1.1"/><path d="M2.6 43.4 V39.4 L5 38 L7 40 L9.6 38 L12 40 L14.6 38 L17 40 L19.6 38 L22 40 L24.6 38 L27 40 L29.6 38 L32 40 L34.6 38 L37 40 L39.6 38 L41.4 39.6 L42.8 38 V43.4 Z" fill="#ffff00"/></g></svg>
<span class="t k24" style="left:14.60px;top:427.38px;font-size:24px;color:#ffff00;letter-spacing:-0.343px;">1<span class="hy" style="transform:scaleX(1.9);margin:0 3.60px">-</span>aug<span class="hy" style="transform:scaleX(1.9);margin:0 3.60px">-</span>1997,23:05:00</span>
<span class="t k24" style="left:259.24px;top:427.38px;font-size:24px;color:#fff;letter-spacing:0.112px;">maxdz plot.  maxdz plot.</span>
<span class="t k24" style="left:14.84px;top:459.38px;font-size:24px;color:#fff;letter-spacing:0.372px;">rhb_met track.</span>
<span class="t k17" style="left:489.50px;top:456.41px;font-size:17px;color:#fff;letter-spacing:0.876px;">maxdz</span>
<span class="t k17" style="left:504.95px;top:478.41px;font-size:17px;color:#fff;letter-spacing:0.100px;">65.0</span>
<span class="t k17" style="left:505.46px;top:506.41px;font-size:17px;color:#fff;letter-spacing:0.100px;">45.0</span>
<span class="t k17" style="left:504.95px;top:534.41px;font-size:17px;color:#fff;letter-spacing:0.100px;">25.0</span>
<span class="t k17" style="left:505.12px;top:562.41px;font-size:17px;color:#fff;letter-spacing:0.100px;">5.0</span>
<span class="t k17" style="left:504.51px;top:590.41px;font-size:17px;color:#fff;letter-spacing:1.100px;"><span class="hy" style="transform:scaleX(1.9);margin:0 2.55px">-</span>15.0</span>
<span class="t k17" style="left:489.50px;top:624.41px;font-size:17px;color:#fff;letter-spacing:0.876px;">maxdz</span>
<span class="t k17" style="left:504.95px;top:646.41px;font-size:17px;color:#fff;letter-spacing:0.100px;">65.0</span>
<span class="t k17" style="left:505.46px;top:674.41px;font-size:17px;color:#fff;letter-spacing:0.100px;">45.0</span>
<span class="t k17" style="left:504.95px;top:702.41px;font-size:17px;color:#fff;letter-spacing:0.100px;">25.0</span>
<span class="t k17" style="left:505.12px;top:730.41px;font-size:17px;color:#fff;letter-spacing:0.100px;">5.0</span>
<span class="t k17" style="left:504.51px;top:758.41px;font-size:17px;color:#fff;letter-spacing:1.100px;"><span class="hy" style="transform:scaleX(1.9);margin:0 2.55px">-</span>15.0</span>
<span class="t" style="left:489.04px;top:801.02px;font-size:8.6px;color:#ff0000;letter-spacing:1.273px;">rhb_met</span>
<span class="t k24" style="left:381.30px;top:838.61px;font-size:25.5px;color:#fff;letter-spacing:-0.828px;">Alt: 0.50 km MSL</span>
<span class="t k17" style="left:40.35px;top:490.22px;font-size:6px;color:#ffee94;letter-spacing:0.400px;">10</span>
<span class="t k17" style="left:257.39px;top:803.32px;font-size:6px;color:#ffee94;letter-spacing:0.211px;"><span class="hy" style="transform:scaleX(1.3);margin:0 0.30px">-</span>100</span>
<div class="b hd" style="left:0px;top:2px;width:573px;height:1px;background-position:0px 0"></div>
<div class="b vd" style="left:572px;top:2px;width:1px;height:384px;background-position:0 0px"></div>
<div class="b hd" style="left:573px;top:2px;width:560px;height:1px;background-position:1px 0"></div>
<div class="b vd" style="left:1132px;top:2px;width:1px;height:385px;background-position:0 0px"></div>
<div class="b hd" style="left:4px;top:426px;width:570px;height:1px;background-position:0px 0"></div>
<div class="b vd" style="left:573px;top:426px;width:1px;height:446px;background-position:0 0px"></div>
<div class="b hd" style="left:5px;top:871px;width:569px;height:1px;background-position:0px 0"></div>
<div class="b" style="left:572px;top:386px;width:2px;height:40px;background:#000;background-image:repeating-conic-gradient(#fff 0 25%,#000 0 50%);background-size:2px 2px;"></div>
<div class="b hd" style="left:574px;top:386px;width:561px;height:1px;background-position:0px 0"></div>
<div class="b vd" style="left:1134px;top:386px;width:1px;height:385px;background-position:0 0px"></div>
<div class="b hd" style="left:574px;top:770px;width:561px;height:1px;background-position:0px 0"></div>
</div></body></html>
